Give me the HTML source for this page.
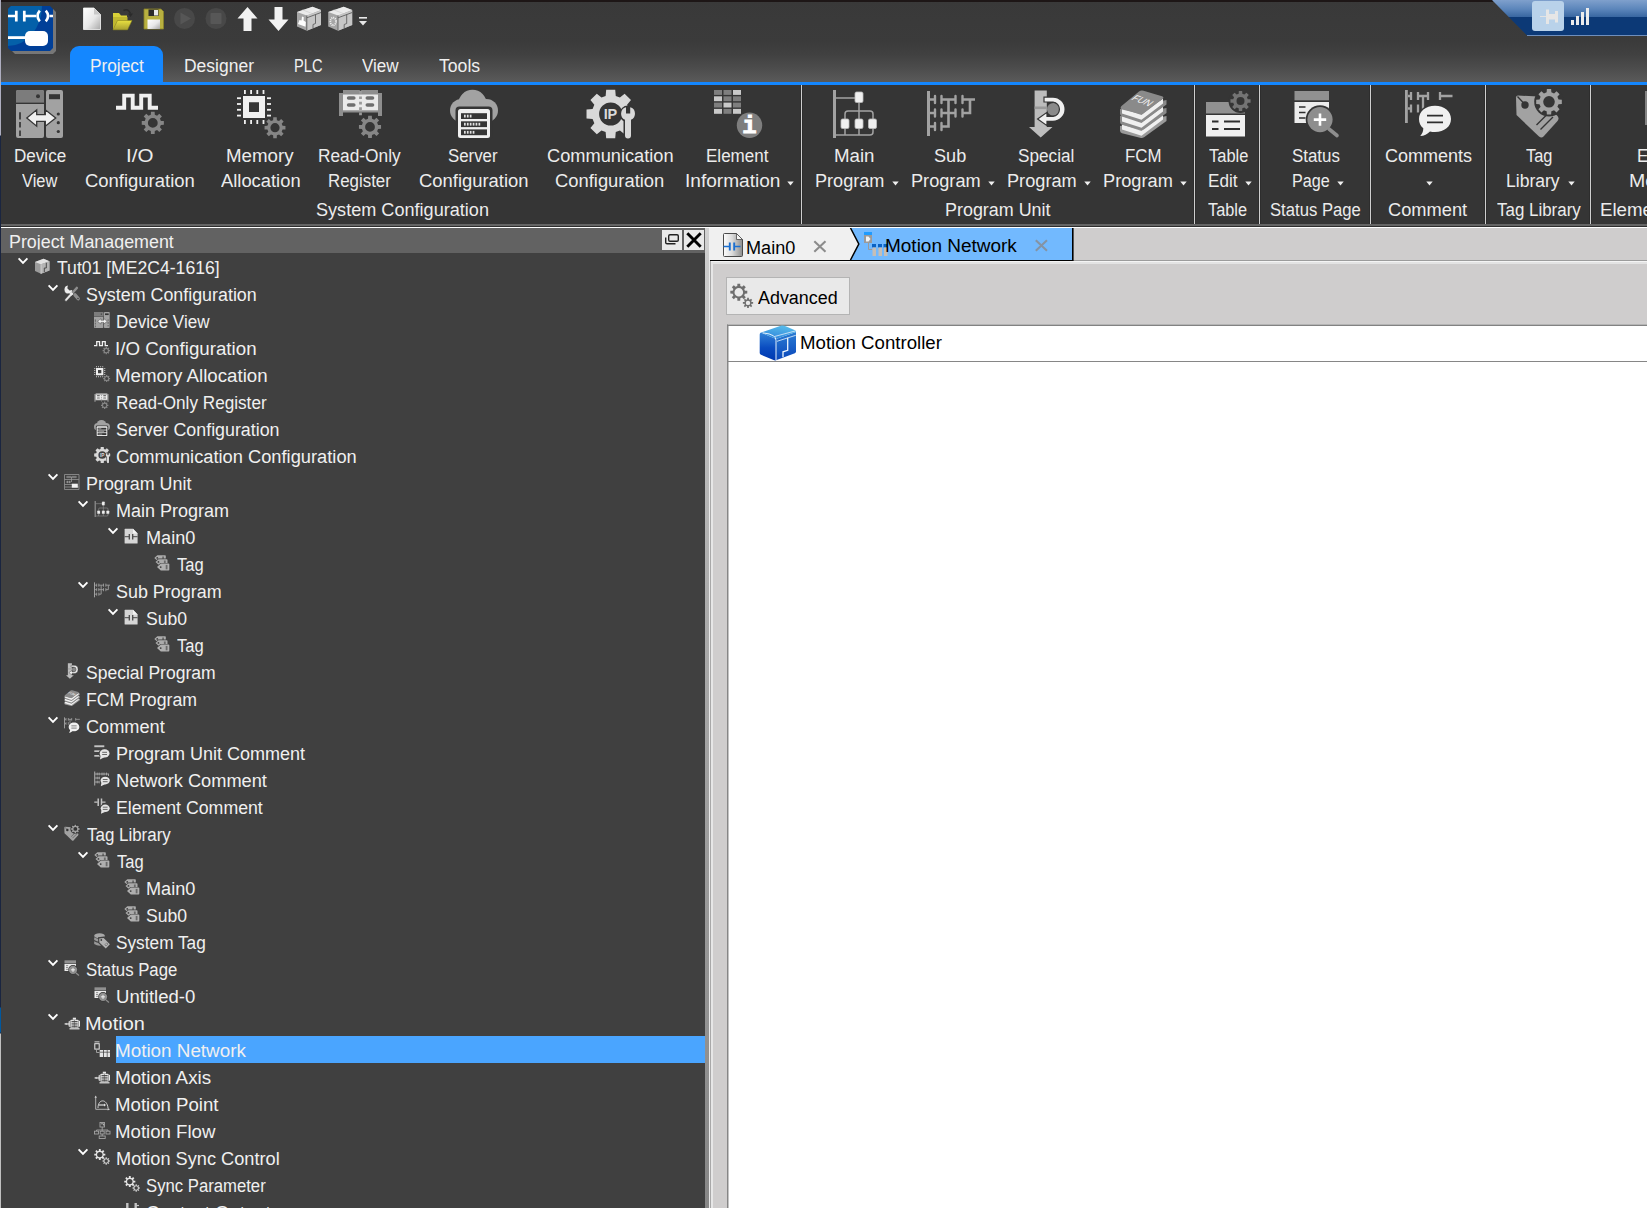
<!DOCTYPE html>
<html><head><meta charset="utf-8"><title>Motion Network</title>
<style>
html,body{margin:0;padding:0;}
body{width:1647px;height:1208px;overflow:hidden;position:relative;background:#404040;font-family:"Liberation Sans",sans-serif;}
.t{position:absolute;white-space:pre;line-height:20px;height:20px;transform-origin:0 50%;font-family:"Liberation Sans",sans-serif;}
.abs{position:absolute;}
#title{position:absolute;left:0;top:0;width:1647px;height:82px;background:linear-gradient(#393939 0,#3b3b3b 42px,#414141 55px,#4c4c4c 68px,#5a5a5a 82px);}
#topline{position:absolute;left:0;top:0;width:1493px;height:2px;background:#1d1616;}
#blue{position:absolute;left:0;top:82px;width:1647px;height:3px;background:#1487ff;}
#ptab{position:absolute;left:70px;top:46px;width:93px;height:39px;background:#1487ff;border-radius:9px 9px 0 0;}
#ribbon{position:absolute;left:0;top:85px;width:1647px;height:139px;background:#353535;}
#ribbot{position:absolute;left:0;top:224px;width:1647px;height:3px;background:#656565;border-bottom:1px solid #2e2e2e;box-sizing:border-box;}
#ribbot2{position:absolute;left:0;top:227px;width:1647px;height:1px;background:#fff;}
#phead{position:absolute;left:0;top:228px;width:706px;height:25px;background:#626262;overflow:hidden;}
#tree{position:absolute;left:0;top:253px;width:705px;height:955px;background:#404040;overflow:hidden;}
#split{position:absolute;left:705px;top:228px;width:4px;height:980px;background:linear-gradient(#d2d2d2 0,#cbcbcb 42px,#ababab 392px,#878787 980px);border-right:1px solid #e8e8e8;}
#right{position:absolute;left:710px;top:228px;width:937px;height:980px;background:#cfcdcd;}
</style></head><body>
<div id="title"></div><div id="topline"></div>
<svg style="position:absolute;left:6px;top:4px;" width="52" height="52" viewBox="0 0 52 52">
<defs><clipPath id="lc"><path d="M5 2 H44 L47 5 V44 L44 47 H5 L2 44 V5 Z"/></clipPath></defs>
<path d="M8 5 H47 L50 8 V47 L47 50 H9 L5 46 Z" fill="#777"/>
<path d="M5 2 H44 L47 5 V44 L44 47 H5 L2 44 V5 Z" fill="#003f98"/>
<g clip-path="url(#lc)"><ellipse cx="2" cy="2" rx="34" ry="40" fill="#0460a9"/></g>
<path d="M2 12 H10 M19 12 H30 M43.500 12 H47" stroke="#fff" stroke-width="2.600" fill="none"/>
<path d="M10.300 6.700 V17.500 M18.300 6.700 V17.500" stroke="#fff" stroke-width="2.700" fill="none"/>
<path d="M33.800 6.700 Q29.300 12 33.800 17.300 M39.800 6.700 Q44.300 12 39.800 17.300" stroke="#fff" stroke-width="2.600" fill="none"/>
<path d="M2 33.600 H22" stroke="#fff" stroke-width="2.800"/>
<rect x="19" y="27" width="23" height="15" rx="5" fill="#fff"/>
</svg>
<svg style="position:absolute;left:80px;top:4px;" width="300" height="32" viewBox="0 0 300 32">
<defs>
<linearGradient id="gdoc" x1="0" y1="0" x2="1" y2="1"><stop offset="0" stop-color="#ffffff"/><stop offset="0.55" stop-color="#e8e8e8"/><stop offset="1" stop-color="#a8a8a8"/></linearGradient>
<linearGradient id="gfold" x1="0" y1="0" x2="0" y2="1"><stop offset="0" stop-color="#e8e040"/><stop offset="1" stop-color="#a8a030"/></linearGradient>
</defs>
<path d="M3.5 4 H14 L20.5 10.5 V25.5 H3.5 Z" fill="url(#gdoc)" stroke="#f8f8f8" stroke-width="0.8"/>
<path d="M14 4 V10.5 H20.5 Z" fill="#c8c8c8"/>
<path d="M33 9 H39 L41 11.5 H47 V16 H33 Z" fill="#d8d038"/>
<path d="M33 13 H47.5 V25.5 H33 Z" fill="#c0b830"/>
<path d="M37.5 16.5 H52 L47.5 25.8 H33 Z" fill="url(#gfold)" stroke="#8a8420" stroke-width="0.6"/>
<path d="M43.5 6.5 Q48 4 50.5 9.5" fill="none" stroke="#2a2a2a" stroke-width="1.6"/><path d="M48 9.5 H53 L50.5 13 Z" fill="#2a2a2a"/>
<path d="M64 5 H81 L83.5 7.5 V25 H64 Z" fill="#b8b040" stroke="#8a8428" stroke-width="0.8"/>
<rect x="68.5" y="5.5" width="10" height="6.5" fill="#2a2a2a"/><rect x="74" y="6" width="4" height="5.5" fill="#e8e8e8"/>
<rect x="67.5" y="15.5" width="12.5" height="9.5" fill="url(#gdoc)"/>
<circle cx="104.5" cy="14.5" r="10.5" fill="#484848"/><path d="M100.5 8.5 L111 14.5 L100.5 20.5 Z" fill="#565656"/>
<circle cx="136" cy="14.5" r="10.5" fill="#484848"/><rect x="130.5" y="9" width="11" height="11" rx="1" fill="#575757"/>
<path d="M167.5 3 L177.5 14.5 H171.5 V27 H163.5 V14.5 H157.5 Z" fill="#f2f2f2"/>
<path d="M198.500 27 L208.5 15.5 H202.5 V3 H194.5 V15.5 H188.500 Z" fill="#f2f2f2"/>
<g transform="translate(217,3)"><path d="M0 5 L15.500 -0.300 L24 3 V18 L9.800 23.800 L0 19.500 Z" fill="#a6a6a6"/><path d="M0 5 L15.500 -0.300 L24 3 L9.800 8.500 Z" fill="#ebebeb"/><path d="M9.800 8.500 L24 3.300 V18 L9.800 23.800 Z" fill="#c6c6c6"/><path d="M9.800 8.500 V23.800 M9.800 10.800 L24 5.500 M18.500 7.500 V16.500 L16 17.500 V21.500" stroke="#606060" stroke-width="0.900" fill="none"/><path d="M5.500 2.800 L15 6.500" stroke="#cdcdcd" stroke-width="0.700" fill="none"/><path d="M5 9.500 L6.800 10.200 L6.500 13.500 L8.800 15 L8.500 19.800 L1 17 L2.500 13 L4.500 13.500 Z" fill="#fff"/></g>
<g transform="translate(248.2,3)"><path d="M0 5 L15.500 -0.300 L24 3 V18 L9.800 23.800 L0 19.500 Z" fill="#a6a6a6"/><path d="M0 5 L15.500 -0.300 L24 3 L9.800 8.500 Z" fill="#ebebeb"/><path d="M9.800 8.500 L24 3.300 V18 L9.800 23.800 Z" fill="#c6c6c6"/><path d="M9.800 8.500 V23.800 M9.800 10.800 L24 5.500 M18.500 7.500 V16.500 L16 17.500 V21.500" stroke="#606060" stroke-width="0.900" fill="none"/><path d="M5.500 2.800 L15 6.500" stroke="#cdcdcd" stroke-width="0.700" fill="none"/><ellipse cx="5" cy="14.500" rx="2.800" ry="3.800" fill="none" stroke="#f4f4f4" stroke-width="1.700" stroke-dasharray="1 0.900"/></g>
<rect x="279" y="13" width="8" height="1.6" fill="#e8e8e8"/><path d="M279 17 H287 L283 21.5 Z" fill="#e8e8e8"/>
</svg>
<svg style="position:absolute;left:1487px;top:0px;" width="160" height="38" viewBox="0 0 160 38">
<defs><linearGradient id="gtr" x1="0" y1="0" x2="0" y2="1"><stop offset="0" stop-color="#7fa0cc"/><stop offset="0.25" stop-color="#5c86bb"/><stop offset="0.46" stop-color="#3a68a2"/><stop offset="0.47" stop-color="#0c3976"/><stop offset="1" stop-color="#0c3976"/></linearGradient></defs>
<path d="M5 0 H160 V36 H40.5 Z" fill="url(#gtr)"/>
<path d="M40 35.5 H160" stroke="#6f8fbd" stroke-width="1.2"/>
<rect x="45" y="1" width="32" height="30" rx="3" fill="#b9d2ea"/>
<path d="M53 16.5 H60" stroke="#e4e4e4" stroke-width="1"/><rect x="59" y="9.500" width="3" height="14.500" fill="#e6e6e6"/><rect x="62" y="14" width="6" height="5.500" fill="#e6e6e6"/><rect x="68" y="11" width="3" height="11.500" fill="#e6e6e6"/>
<rect x="84" y="20" width="3" height="5" fill="#ececec"/><rect x="89" y="16" width="3" height="9" fill="#ececec"/><rect x="94" y="12" width="3" height="13" fill="#ececec"/><rect x="99" y="8" width="3" height="17" fill="#ececec"/>
</svg>
<div id="ptab"></div><div id="blue"></div>
<div id="ribbon"></div><div style="position:absolute;left:800px;top:85px;width:1px;height:139px;background:#cfcfcf;border-left:1px solid #2d2d2d;border-right:1px solid #2d2d2d"></div><div style="position:absolute;left:1193px;top:85px;width:1px;height:139px;background:#cfcfcf;border-left:1px solid #2d2d2d;border-right:1px solid #2d2d2d"></div><div style="position:absolute;left:1258px;top:85px;width:1px;height:139px;background:#cfcfcf;border-left:1px solid #2d2d2d;border-right:1px solid #2d2d2d"></div><div style="position:absolute;left:1369px;top:85px;width:1px;height:139px;background:#cfcfcf;border-left:1px solid #2d2d2d;border-right:1px solid #2d2d2d"></div><div style="position:absolute;left:1484px;top:85px;width:1px;height:139px;background:#cfcfcf;border-left:1px solid #2d2d2d;border-right:1px solid #2d2d2d"></div><div style="position:absolute;left:1589px;top:85px;width:1px;height:139px;background:#cfcfcf;border-left:1px solid #2d2d2d;border-right:1px solid #2d2d2d"></div>
<svg style="position:absolute;left:0;top:85px" width="1647" height="60" viewBox="0 85 1647 60">
<rect x="16" y="90" width="28" height="48" rx="2" fill="#a2a2a2"/>
<path d="M18 90 H42 Q44 90 44 92 V102.500 H16 V92 Q16 90 18 90 Z" fill="#7c7c7c"/>
<rect x="16" y="102.500" width="28" height="1.500" fill="#353535"/>
<rect x="46" y="90" width="17" height="48" rx="2" fill="#a2a2a2"/>
<circle cx="38" cy="96.300" r="2" fill="#353535"/>
<rect x="49" y="94.200" width="11" height="5" fill="#353535"/>
<path d="M20 112.300 V119.500 M20 122 V127.500 M20 130.500 V136" stroke="#353535" stroke-width="1.700"/>
<circle cx="58.300" cy="114" r="1.600" fill="#353535"/><circle cx="58.300" cy="122.700" r="1.600" fill="#353535"/><circle cx="58.300" cy="131.500" r="1.600" fill="#353535"/>
<path d="M26.800 118 L36.700 109.800 V114.700 H45.300 V109.800 L55.700 118 L45.300 126.200 V121.300 H36.700 V126.200 Z" fill="#f0f0f0" stroke="#353535" stroke-width="1.300" stroke-linejoin="miter"/>

<path d="M116 107.800 H124.200 V95.600 H132.700 V107.800 H141.200 V95.600 H149.700 V107.800 H158" fill="none" stroke="#f0f0f0" stroke-width="3.900"/>
<path d="M150.80 114.84 L150.96 111.85 L154.64 111.85 L154.80 114.84 L157.08 115.79 L159.31 113.79 L161.91 116.39 L159.91 118.62 L160.86 120.90 L163.85 121.06 L163.85 124.74 L160.86 124.90 L159.91 127.18 L161.91 129.41 L159.31 132.01 L157.08 130.01 L154.80 130.96 L154.64 133.95 L150.96 133.95 L150.80 130.96 L148.52 130.01 L146.29 132.01 L143.69 129.41 L145.69 127.18 L144.74 124.90 L141.75 124.74 L141.75 121.06 L144.74 120.90 L145.69 118.62 L143.69 116.39 L146.29 113.79 L148.52 115.79 Z M147.90 122.90 a4.90 4.90 0 1 0 9.80 0 a4.90 4.90 0 1 0 -9.80 0 Z" fill="#868686" fill-rule="evenodd"/>

<path d="M243 96 H265 V118 H243 Z M249 102.200 V112 H259 V102.200 Z" fill="#f0f0f0" fill-rule="evenodd"/>
<rect x="244.0" y="90" width="1.800" height="4" fill="#f0f0f0"/><rect x="244.0" y="120" width="1.800" height="4" fill="#f0f0f0"/><rect x="237" y="97.3" width="4" height="1.800" fill="#f0f0f0"/><rect x="267" y="97.3" width="4" height="1.800" fill="#f0f0f0"/><rect x="250.2" y="90" width="1.800" height="4" fill="#f0f0f0"/><rect x="250.2" y="120" width="1.800" height="4" fill="#f0f0f0"/><rect x="237" y="103.1" width="4" height="1.800" fill="#f0f0f0"/><rect x="267" y="103.1" width="4" height="1.800" fill="#f0f0f0"/><rect x="256.4" y="90" width="1.800" height="4" fill="#f0f0f0"/><rect x="256.4" y="120" width="1.800" height="4" fill="#f0f0f0"/><rect x="237" y="108.9" width="4" height="1.800" fill="#f0f0f0"/><rect x="267" y="108.9" width="4" height="1.800" fill="#f0f0f0"/><rect x="262.6" y="90" width="1.800" height="4" fill="#f0f0f0"/><rect x="262.6" y="120" width="1.800" height="4" fill="#f0f0f0"/><rect x="237" y="114.7" width="4" height="1.800" fill="#f0f0f0"/><rect x="267" y="114.7" width="4" height="1.800" fill="#f0f0f0"/>
<path d="M273.12 120.13 L273.26 117.24 L276.74 117.24 L276.88 120.13 L279.02 121.02 L281.16 119.08 L283.62 121.54 L281.68 123.68 L282.57 125.82 L285.46 125.96 L285.46 129.44 L282.57 129.58 L281.68 131.72 L283.62 133.86 L281.16 136.32 L279.02 134.38 L276.88 135.27 L276.74 138.16 L273.26 138.16 L273.12 135.27 L270.98 134.38 L268.84 136.32 L266.38 133.86 L268.32 131.72 L267.43 129.58 L264.54 129.44 L264.54 125.96 L267.43 125.82 L268.32 123.68 L266.38 121.54 L268.84 119.08 L270.98 121.02 Z M270.40 127.70 a4.60 4.60 0 1 0 9.20 0 a4.60 4.60 0 1 0 -9.20 0 Z" fill="#868686" fill-rule="evenodd"/>

<path d="M339 93 H343 V90 H359.500 L360.500 91 L361.500 90 H378 V93 H382 V116 H378 V112.500 H343 V116 H339 Z" fill="#8e8e8e"/>
<rect x="343" y="94.500" width="35" height="15.800" fill="#eaeaea"/>
<path d="M360.500 91 V118" stroke="#9a9a9a" stroke-width="2.800" stroke-dasharray="2.700 2.700"/>
<rect x="346.800" y="96.200" width="8.800" height="3.600" rx="1.800" fill="#6e6e6e"/><rect x="346.800" y="103.200" width="8.800" height="3.600" rx="1.800" fill="#6e6e6e"/>
<rect x="365.500" y="96.200" width="8.800" height="3.600" rx="1.800" fill="#6e6e6e"/><rect x="365.500" y="103.200" width="8.800" height="3.600" rx="1.800" fill="#6e6e6e"/>
<path d="M368.00 118.84 L368.16 115.85 L371.84 115.85 L372.00 118.84 L374.28 119.79 L376.51 117.79 L379.11 120.39 L377.11 122.62 L378.06 124.90 L381.05 125.06 L381.05 128.74 L378.06 128.90 L377.11 131.18 L379.11 133.41 L376.51 136.01 L374.28 134.01 L372.00 134.96 L371.84 137.95 L368.16 137.95 L368.00 134.96 L365.72 134.01 L363.49 136.01 L360.89 133.41 L362.89 131.18 L361.94 128.90 L358.95 128.74 L358.95 125.06 L361.94 124.90 L362.89 122.62 L360.89 120.39 L363.49 117.79 L365.72 119.79 Z M365.10 126.90 a4.90 4.90 0 1 0 9.80 0 a4.90 4.90 0 1 0 -9.80 0 Z" fill="#868686" fill-rule="evenodd"/>

<circle cx="472.500" cy="104" r="14.200" fill="#a2a2a2"/><circle cx="461.500" cy="110.500" r="11.500" fill="#a2a2a2"/><circle cx="486.500" cy="110.500" r="11.500" fill="#a2a2a2"/>
<rect x="455.500" y="106.500" width="37" height="33" rx="4" fill="#353535"/>
<rect x="458" y="109" width="32" height="29" rx="2.500" fill="#f0f0f0"/>
<rect x="461" y="113.2" width="26" height="5.800" fill="#353535"/><rect x="464.0" y="114.7" width="1.700" height="2.800" fill="#e0e0e0"/><rect x="466.9" y="114.7" width="1.700" height="2.800" fill="#e0e0e0"/><rect x="469.8" y="114.7" width="1.700" height="2.800" fill="#e0e0e0"/><rect x="461" y="121.3" width="26" height="5.800" fill="#353535"/><rect x="464.0" y="122.8" width="1.700" height="2.800" fill="#e0e0e0"/><rect x="466.9" y="122.8" width="1.700" height="2.800" fill="#e0e0e0"/><rect x="469.8" y="122.8" width="1.700" height="2.800" fill="#e0e0e0"/><rect x="472.7" y="122.8" width="1.700" height="2.800" fill="#e0e0e0"/><rect x="475.6" y="122.8" width="1.700" height="2.800" fill="#e0e0e0"/><rect x="478.5" y="122.8" width="1.700" height="2.800" fill="#e0e0e0"/><rect x="461" y="129.4" width="26" height="5.800" fill="#353535"/><rect x="464.0" y="130.9" width="1.700" height="2.800" fill="#e0e0e0"/><rect x="466.9" y="130.9" width="1.700" height="2.800" fill="#e0e0e0"/><rect x="469.8" y="130.9" width="1.700" height="2.800" fill="#e0e0e0"/><rect x="472.7" y="130.9" width="1.700" height="2.800" fill="#e0e0e0"/>

<path d="M605.64 95.89 L606.18 89.82 L615.22 89.82 L615.76 95.89 L619.92 97.62 L624.60 93.71 L630.99 100.10 L627.08 104.78 L628.81 108.94 L634.88 109.48 L634.88 118.52 L628.81 119.06 L627.08 123.22 L630.99 127.90 L624.60 134.29 L619.92 130.38 L615.76 132.11 L615.22 138.18 L606.18 138.18 L605.64 132.11 L601.48 130.38 L596.80 134.29 L590.41 127.90 L594.32 123.22 L592.59 119.06 L586.52 118.52 L586.52 109.48 L592.59 108.94 L594.32 104.78 L590.41 100.10 L596.80 93.71 L601.48 97.62 Z M599.10 114.00 a11.60 11.60 0 1 0 23.20 0 a11.60 11.60 0 1 0 -23.20 0 Z" fill="#d9d9d9" fill-rule="evenodd"/>
<path d="M619.500 114 a8.500 8.500 0 1 1 17 0 a8.500 8.500 0 0 1 -4 7.200 V140 H623.500 V121.200 a8.500 8.500 0 0 1 -4 -7.200 Z" fill="#353535"/>
<path d="M626 107.300 V113.500 H630.200 V107.300 A6.600 6.600 0 0 1 631 119.700 V135.500 A3 3 0 0 1 625 135.500 V119.700 A6.600 6.600 0 0 1 626 107.300 Z" fill="#d9d9d9"/>
<text x="610.400" y="119.300" font-family="Liberation Sans, sans-serif" font-weight="bold" font-size="14.500" fill="#d9d9d9" text-anchor="middle" letter-spacing="-0.3">IP</text>
<rect x="714.0" y="90.0" width="8" height="4.900" fill="#7e7e7e"/><rect x="723.5" y="90.0" width="8" height="4.900" fill="#7e7e7e"/><rect x="733.0" y="90.0" width="8" height="4.900" fill="#c9c9c9"/><rect x="714.0" y="96.3" width="8" height="4.900" fill="#c9c9c9"/><rect x="723.5" y="96.3" width="8" height="4.900" fill="#7e7e7e"/><rect x="733.0" y="96.3" width="8" height="4.900" fill="#7e7e7e"/><rect x="714.0" y="102.6" width="8" height="4.900" fill="#7e7e7e"/><rect x="723.5" y="102.6" width="8" height="4.900" fill="#c9c9c9"/><rect x="733.0" y="102.6" width="8" height="4.900" fill="#7e7e7e"/><rect x="714.0" y="108.9" width="8" height="4.900" fill="#c9c9c9"/><rect x="723.5" y="108.9" width="8" height="4.900" fill="#7e7e7e"/><rect x="733.0" y="108.9" width="8" height="4.900" fill="#c9c9c9"/>
<circle cx="749.500" cy="125.200" r="12.700" fill="#7e7e7e"/>
<text x="749.500" y="133.200" font-family="Liberation Mono, monospace" font-weight="bold" font-size="24" fill="#fff" stroke="#fff" stroke-width="0.900" text-anchor="middle">i</text>

<rect x="833" y="90" width="3" height="48" fill="#a2a2a2"/>
<path d="M836 98 H856 M859 102 V135 M836 135 H870 Q873 135 873 132 V128 M845 128 V135 M845 119 V114 Q845 111 848 111 H870 Q873 111 873 114 V119" fill="none" stroke="#a2a2a2" stroke-width="1.500"/>
<rect x="855" y="92" width="8" height="10.500" rx="1.500" fill="#f0f0f0" stroke="#bdbdbd" stroke-width="0.800"/>
<rect x="841" y="119" width="8" height="9.500" rx="1.500" fill="#f0f0f0" stroke="#bdbdbd" stroke-width="0.800"/>
<rect x="855" y="119" width="8" height="9.500" rx="1.500" fill="#f0f0f0" stroke="#bdbdbd" stroke-width="0.800"/>
<rect x="868.500" y="119" width="8" height="9.500" rx="1.500" fill="#f0f0f0" stroke="#bdbdbd" stroke-width="0.800"/>

<rect x="927" y="91" width="3" height="45" fill="#a2a2a2"/>
<g fill="none" stroke="#a2a2a2" stroke-width="2.400" stroke-linecap="round">
<path d="M930 99.500 H935 M935 96 V103 M941.500 96 V103 M941.500 99.500 H955.500 M955.500 96 V103 M962.500 96 V103"/>
<path d="M930 113 H935 M935 109.500 V116.500 M941.500 109.500 V116.500 M941.500 113 H955.500 M955.500 109.500 V116.500 M962.500 109.500 V116.500"/>
<path d="M930 126.500 H935 M935 123 V130 M941.500 123 V130"/>
</g>
<g fill="none" stroke="#a2a2a2" stroke-width="2.600">
<path d="M962.500 99.500 H975 M970 99.500 V113 H962.500"/>
<path d="M948.500 99.500 V126.500 H941.500"/>
</g>

<path d="M1034.600 90.500 H1046.800 V127 H1052.500 L1040.700 137.500 L1029 127 H1034.600 Z" fill="#bdbdbd"/>
<rect x="1034.600" y="106.500" width="12.200" height="2.600" fill="#9a9a9a"/>
<circle cx="1053.300" cy="109.300" r="6.300" fill="#8a8a8a"/>
<path d="M1044 97.100 H1053 A12.100 12.100 0 0 1 1053 121.300 H1047 V125.700 L1037.600 119 L1047 112.300 V116.500 H1053 A7.300 7.300 0 0 0 1053 102 H1044 Z" fill="#f0f0f0" stroke="#353535" stroke-width="1.200"/>

<g>
<path d="M1120 126 L1120 130.500 Q1120 132.500 1122 133.300 L1141 138 Q1142.500 138.300 1144 137.300 L1166.500 121 V116 Z" fill="#9a9a9a"/>
<path d="M1122 124.500 L1141.500 131 L1163 114.500 V119.500 L1141.500 135.700 L1122 129.500 Z" fill="#f0f0f0"/>
<path d="M1120 116 L1120 122 Q1120 124 1122 124.800 L1141 130 Q1142.500 130.300 1144 129.300 L1166.500 113 V108 Z" fill="#8a8a8a"/>
<path d="M1122 116.500 L1141.500 123 L1163 106.500 V111.500 L1141.500 127.700 L1122 121.500 Z" fill="#f0f0f0"/>
<path d="M1120 109 L1120 113.500 Q1120 115.500 1122 116.300 L1141 121.500 Q1142.500 121.800 1144 120.800 L1166.500 104.500 V100 Z" fill="#8a8a8a"/>
<path d="M1122 108.500 L1141.500 115 L1163 98.500 V103.500 L1141.500 119.700 L1122 113.500 Z" fill="#f0f0f0"/>
<path d="M1121.500 106 L1139 91.500 Q1141 90 1143.500 90.700 L1162 96.200 Q1164.500 97.200 1162.500 99 L1143 113.500 Q1141.500 114.300 1139.500 113.800 L1122 109.500 Q1119.500 108.300 1121.500 106 Z" fill="#8a8a8a"/>
<text transform="translate(1130.500,99.500) rotate(21) skewX(-30)" font-family="Liberation Sans, sans-serif" font-size="9.500" fill="#f0f0f0">FUN</text>
</g>

<rect x="1206" y="102" width="39" height="11.500" fill="#919191"/>
<rect x="1206" y="115" width="39" height="21.500" fill="#f0f0f0"/>
<path d="M1212 121.500 H1218.500 M1224 121.500 H1240 M1212 129 H1218.500 M1224 129 H1240" stroke="#2e2e2e" stroke-width="1.800"/>
<circle cx="1240.500" cy="101" r="12" fill="#353535"/>
<path d="M1238.69 93.72 L1238.83 90.94 L1242.17 90.94 L1242.31 93.72 L1244.37 94.57 L1246.43 92.70 L1248.80 95.07 L1246.93 97.13 L1247.78 99.19 L1250.56 99.33 L1250.56 102.67 L1247.78 102.81 L1246.93 104.87 L1248.80 106.93 L1246.43 109.30 L1244.37 107.43 L1242.31 108.28 L1242.17 111.06 L1238.83 111.06 L1238.69 108.28 L1236.63 107.43 L1234.57 109.30 L1232.20 106.93 L1234.07 104.87 L1233.22 102.81 L1230.44 102.67 L1230.44 99.33 L1233.22 99.19 L1234.07 97.13 L1232.20 95.07 L1234.57 92.70 L1236.63 94.57 Z M1236.50 101.00 a4.00 4.00 0 1 0 8.00 0 a4.00 4.00 0 1 0 -8.00 0 Z" fill="#747474" fill-rule="evenodd"/>

<rect x="1294.500" y="91" width="34.500" height="9.300" fill="#919191"/>
<rect x="1294.500" y="102" width="34.500" height="21" fill="#ececec"/>
<path d="M1299 107 H1305.500 M1299 112.500 H1305.500 M1299 118 H1305.500" stroke="#2e2e2e" stroke-width="1.500"/>
<circle cx="1320" cy="119.600" r="14.300" fill="#353535"/>
<path d="M1329 129 L1337 135.500" stroke="#8e8e8e" stroke-width="3.600" stroke-linecap="round"/>
<circle cx="1320" cy="119.600" r="12.600" fill="#8e8e8e"/>
<path d="M1313.800 119.600 H1326.200 M1320 113.400 V125.800" stroke="#fff" stroke-width="2.600"/>

<rect x="1405" y="90" width="2.800" height="33" fill="#a2a2a2"/>
<g fill="none" stroke="#a2a2a2" stroke-width="2.300">
<path d="M1408 96 H1411 M1411 92 V100 M1418 92 V100 M1418 96 H1428 M1428 92 V100 M1440 92 V100 M1440 96 H1452.500"/>
<path d="M1408 108.500 H1411 M1411 104.500 V112.500 M1418 104.500 V112.500 M1423 96 V110"/>
</g>
<ellipse cx="1435" cy="119" rx="17.800" ry="15" fill="#353535"/>
<path d="M1435 105.800 C1444.500 105.800 1451 111.500 1451 119 C1451 126.500 1444.500 132 1435 132 C1433 132 1431.500 131.800 1430 131.400 C1427.500 134 1424 135.800 1420.300 136 C1422.500 133.500 1423.300 131 1423.300 128.300 C1420.500 126 1419 122.800 1419 119 C1419 111.500 1425.500 105.800 1435 105.800 Z" fill="#f0f0f0"/>
<path d="M1427 115.600 H1443 M1427 122.300 H1443" stroke="#2e2e2e" stroke-width="1.700"/>

<path d="M1516 97.500 Q1516 95.500 1518 95.500 L1538 96.500 L1557.500 116 Q1559.500 118.500 1557.500 121 L1543.500 136.500 Q1541.500 138.500 1539 136.500 L1516.500 115 Z" fill="#a2a2a2"/>
<circle cx="1525" cy="105" r="3.700" fill="#353535"/>
<path d="M1517.500 96.500 L1524 103.500" stroke="#353535" stroke-width="1.300"/>
<path d="M1536.500 125 L1549 112.500 M1540.500 129.500 L1553 117" stroke="#353535" stroke-width="1.400"/>
<circle cx="1549" cy="101.800" r="14.800" fill="#353535"/>
<path d="M1546.64 92.29 L1546.87 88.98 L1551.13 88.98 L1551.36 92.29 L1554.05 93.40 L1556.56 91.22 L1559.58 94.24 L1557.40 96.75 L1558.51 99.44 L1561.82 99.67 L1561.82 103.93 L1558.51 104.16 L1557.40 106.85 L1559.58 109.36 L1556.56 112.38 L1554.05 110.20 L1551.36 111.31 L1551.13 114.62 L1546.87 114.62 L1546.64 111.31 L1543.95 110.20 L1541.44 112.38 L1538.42 109.36 L1540.60 106.85 L1539.49 104.16 L1536.18 103.93 L1536.18 99.67 L1539.49 99.44 L1540.60 96.75 L1538.42 94.24 L1541.44 91.22 L1543.95 93.40 Z M1543.20 101.80 a5.80 5.80 0 1 0 11.60 0 a5.80 5.80 0 1 0 -11.60 0 Z" fill="#a2a2a2" fill-rule="evenodd"/>
<rect x="1645" y="91" width="4" height="34" fill="#858585"/></svg>
<svg style="position:absolute;left:786.9px;top:181px" width="7" height="5" viewBox="0 0 7 5"><path d="M0.3 0.5 H6.7 L3.5 4.4 Z" fill="#f0f0f0"/></svg><svg style="position:absolute;left:891.8px;top:181px" width="7" height="5" viewBox="0 0 7 5"><path d="M0.3 0.5 H6.7 L3.5 4.4 Z" fill="#f0f0f0"/></svg><svg style="position:absolute;left:987.5px;top:181px" width="7" height="5" viewBox="0 0 7 5"><path d="M0.3 0.5 H6.7 L3.5 4.4 Z" fill="#f0f0f0"/></svg><svg style="position:absolute;left:1083.7px;top:181px" width="7" height="5" viewBox="0 0 7 5"><path d="M0.3 0.5 H6.7 L3.5 4.4 Z" fill="#f0f0f0"/></svg><svg style="position:absolute;left:1180.0px;top:181px" width="7" height="5" viewBox="0 0 7 5"><path d="M0.3 0.5 H6.7 L3.5 4.4 Z" fill="#f0f0f0"/></svg><svg style="position:absolute;left:1245.0px;top:181px" width="7" height="5" viewBox="0 0 7 5"><path d="M0.3 0.5 H6.7 L3.5 4.4 Z" fill="#f0f0f0"/></svg><svg style="position:absolute;left:1337.2px;top:181px" width="7" height="5" viewBox="0 0 7 5"><path d="M0.3 0.5 H6.7 L3.5 4.4 Z" fill="#f0f0f0"/></svg><svg style="position:absolute;left:1425.7px;top:181px" width="7" height="5" viewBox="0 0 7 5"><path d="M0.3 0.5 H6.7 L3.5 4.4 Z" fill="#f0f0f0"/></svg><svg style="position:absolute;left:1568.0px;top:181px" width="7" height="5" viewBox="0 0 7 5"><path d="M0.3 0.5 H6.7 L3.5 4.4 Z" fill="#f0f0f0"/></svg><svg style="position:absolute;left:1701.5px;top:181px" width="7" height="5" viewBox="0 0 7 5"><path d="M0.3 0.5 H6.7 L3.5 4.4 Z" fill="#f0f0f0"/></svg>
<div id="ribbot"></div><div id="ribbot2"></div>
<div id="phead"></div>
<svg style="position:absolute;left:660px;top:228px;" width="46" height="25" viewBox="0 0 46 25">
<rect x="2" y="2" width="20" height="20" fill="#e9e9e9"/>
<rect x="24" y="2" width="20" height="20" fill="#e9e9e9"/>
<rect x="8.700" y="6.700" width="9.600" height="6.600" rx="1.3" fill="none" stroke="#222" stroke-width="1.4"/>
<path d="M5.700 9.500 V14.400 Q5.700 15.800 7.100 15.800 H15.500" fill="none" stroke="#222" stroke-width="1.4"/>
<path d="M27.300 5.300 L40.700 18.700 M40.700 5.300 L27.300 18.700" stroke="#000" stroke-width="2.900"/>
</svg>
<div id="tree"><div style="position:absolute;left:34.0px;top:5px;width:16px;height:16px"><svg width="16" height="16" viewBox="0 0 16 16" style="display:block;overflow:visible">
<path d="M1 4 L9.500 0.800 L15.500 3.200 V12.500 L7 15.800 L1 13 Z" fill="#9c9c9c"/>
<path d="M1 4 L9.500 0.800 L15.500 3.200 L7 6.300 Z" fill="#e2e2e2"/>
<path d="M7 6.300 L15.500 3.200 V12.500 L7 15.800 Z" fill="#b4b4b4"/>
<path d="M7 6.300 V15.800" stroke="#dcdcdc" stroke-width="0.700"/>
<path d="M12.300 4.800 V10 H10.300 V14" stroke="#4a4a4a" stroke-width="1" fill="none"/>
</svg></div><svg style="position:absolute;left:16.8px;top:3px" width="12" height="10" viewBox="0 0 12 10"><path d="M1.6 2.4 L6 6.8 L10.4 2.4" fill="none" stroke="#fff" stroke-width="1.9"/></svg><div style="position:absolute;left:64.0px;top:32px;width:16px;height:16px"><svg width="16" height="16" viewBox="0 0 16 16" style="display:block;overflow:visible">
<path d="M2 15 L12.800 3" stroke="#8e8e8e" stroke-width="2.600" stroke-linecap="round"/>
<path d="M11 9.800 L14.200 13.600" stroke="#8e8e8e" stroke-width="3.400" stroke-linecap="round"/>
<circle cx="14" cy="13.500" r="0.800" fill="#404040"/>
<path d="M2.200 14.800 L6.200 10.400" stroke="#e8e8e8" stroke-width="1.700" stroke-linecap="round"/>
<path d="M6.500 9.700 L8.300 8" stroke="#e8e8e8" stroke-width="2.300"/>
<path d="M3.900 0.600 A3.900 3.900 0 1 0 8.300 4.900 L5.500 5.400 L3.300 3.300 Z" fill="#ececec"/>
<path d="M0.500 3.500 A4 4 0 0 0 7.500 7.200 L9.300 9 L7.500 10.800 L5.400 8.600 A4 4 0 0 1 0.500 3.500 Z" fill="#ececec"/>
</svg></div><svg style="position:absolute;left:46.8px;top:30px" width="12" height="10" viewBox="0 0 12 10"><path d="M1.6 2.4 L6 6.8 L10.4 2.4" fill="none" stroke="#fff" stroke-width="1.9"/></svg><div style="position:absolute;left:94.0px;top:59px;width:16px;height:16px"><svg width="16" height="16" viewBox="16 90 48 48" style="display:block;overflow:visible">
<rect x="16" y="90" width="28" height="48" rx="2" fill="#a2a2a2"/>
<path d="M18 90 H42 Q44 90 44 92 V102.500 H16 V92 Q16 90 18 90 Z" fill="#7c7c7c"/>
<rect x="16" y="102.500" width="28" height="1.500" fill="#353535"/>
<rect x="46" y="90" width="17" height="48" rx="2" fill="#a2a2a2"/>
<circle cx="38" cy="96.300" r="2" fill="#353535"/>
<rect x="49" y="94.200" width="11" height="5" fill="#353535"/>
<path d="M20 112.300 V119.500 M20 122 V127.500 M20 130.500 V136" stroke="#353535" stroke-width="1.700"/>
<circle cx="58.300" cy="114" r="1.600" fill="#353535"/><circle cx="58.300" cy="122.700" r="1.600" fill="#353535"/><circle cx="58.300" cy="131.500" r="1.600" fill="#353535"/>
<path d="M26.800 118 L36.700 109.800 V114.700 H45.300 V109.800 L55.700 118 L45.300 126.200 V121.300 H36.700 V126.200 Z" fill="#f0f0f0" stroke="#353535" stroke-width="1.300" stroke-linejoin="miter"/>
</svg></div><div style="position:absolute;left:94.0px;top:86px;width:16px;height:16px"><svg width="16" height="16" viewBox="116 88 48 48" style="display:block;overflow:visible">
<path d="M116 107.800 H124.200 V95.600 H132.700 V107.800 H141.200 V95.600 H149.700 V107.800 H158" fill="none" stroke="#f0f0f0" stroke-width="3.900"/>
<path d="M150.80 114.84 L150.96 111.85 L154.64 111.85 L154.80 114.84 L157.08 115.79 L159.31 113.79 L161.91 116.39 L159.91 118.62 L160.86 120.90 L163.85 121.06 L163.85 124.74 L160.86 124.90 L159.91 127.18 L161.91 129.41 L159.31 132.01 L157.08 130.01 L154.80 130.96 L154.64 133.95 L150.96 133.95 L150.80 130.96 L148.52 130.01 L146.29 132.01 L143.69 129.41 L145.69 127.18 L144.74 124.90 L141.75 124.74 L141.75 121.06 L144.74 120.90 L145.69 118.62 L143.69 116.39 L146.29 113.79 L148.52 115.79 Z M147.90 122.90 a4.90 4.90 0 1 0 9.80 0 a4.90 4.90 0 1 0 -9.80 0 Z" fill="#868686" fill-rule="evenodd"/>
</svg></div><div style="position:absolute;left:94.0px;top:113px;width:16px;height:16px"><svg width="16" height="16" viewBox="237 90 48 48" style="display:block;overflow:visible">
<path d="M243 96 H265 V118 H243 Z M249 102.200 V112 H259 V102.200 Z" fill="#f0f0f0" fill-rule="evenodd"/>
<rect x="244.0" y="90" width="1.800" height="4" fill="#f0f0f0"/><rect x="244.0" y="120" width="1.800" height="4" fill="#f0f0f0"/><rect x="237" y="97.3" width="4" height="1.800" fill="#f0f0f0"/><rect x="267" y="97.3" width="4" height="1.800" fill="#f0f0f0"/><rect x="250.2" y="90" width="1.800" height="4" fill="#f0f0f0"/><rect x="250.2" y="120" width="1.800" height="4" fill="#f0f0f0"/><rect x="237" y="103.1" width="4" height="1.800" fill="#f0f0f0"/><rect x="267" y="103.1" width="4" height="1.800" fill="#f0f0f0"/><rect x="256.4" y="90" width="1.800" height="4" fill="#f0f0f0"/><rect x="256.4" y="120" width="1.800" height="4" fill="#f0f0f0"/><rect x="237" y="108.9" width="4" height="1.800" fill="#f0f0f0"/><rect x="267" y="108.9" width="4" height="1.800" fill="#f0f0f0"/><rect x="262.6" y="90" width="1.800" height="4" fill="#f0f0f0"/><rect x="262.6" y="120" width="1.800" height="4" fill="#f0f0f0"/><rect x="237" y="114.7" width="4" height="1.800" fill="#f0f0f0"/><rect x="267" y="114.7" width="4" height="1.800" fill="#f0f0f0"/>
<path d="M273.12 120.13 L273.26 117.24 L276.74 117.24 L276.88 120.13 L279.02 121.02 L281.16 119.08 L283.62 121.54 L281.68 123.68 L282.57 125.82 L285.46 125.96 L285.46 129.44 L282.57 129.58 L281.68 131.72 L283.62 133.86 L281.16 136.32 L279.02 134.38 L276.88 135.27 L276.74 138.16 L273.26 138.16 L273.12 135.27 L270.98 134.38 L268.84 136.32 L266.38 133.86 L268.32 131.72 L267.43 129.58 L264.54 129.44 L264.54 125.96 L267.43 125.82 L268.32 123.68 L266.38 121.54 L268.84 119.08 L270.98 121.02 Z M270.40 127.70 a4.60 4.60 0 1 0 9.20 0 a4.60 4.60 0 1 0 -9.20 0 Z" fill="#868686" fill-rule="evenodd"/>
</svg></div><div style="position:absolute;left:94.0px;top:140px;width:16px;height:16px"><svg width="16" height="16" viewBox="338 90 48 48" style="display:block;overflow:visible">
<path d="M339 93 H343 V90 H359.500 L360.500 91 L361.500 90 H378 V93 H382 V116 H378 V112.500 H343 V116 H339 Z" fill="#8e8e8e"/>
<rect x="343" y="94.500" width="35" height="15.800" fill="#eaeaea"/>
<path d="M360.500 91 V118" stroke="#9a9a9a" stroke-width="2.800" stroke-dasharray="2.700 2.700"/>
<rect x="346.800" y="96.200" width="8.800" height="3.600" rx="1.800" fill="#6e6e6e"/><rect x="346.800" y="103.200" width="8.800" height="3.600" rx="1.800" fill="#6e6e6e"/>
<rect x="365.500" y="96.200" width="8.800" height="3.600" rx="1.800" fill="#6e6e6e"/><rect x="365.500" y="103.200" width="8.800" height="3.600" rx="1.800" fill="#6e6e6e"/>
<path d="M368.00 118.84 L368.16 115.85 L371.84 115.85 L372.00 118.84 L374.28 119.79 L376.51 117.79 L379.11 120.39 L377.11 122.62 L378.06 124.90 L381.05 125.06 L381.05 128.74 L378.06 128.90 L377.11 131.18 L379.11 133.41 L376.51 136.01 L374.28 134.01 L372.00 134.96 L371.84 137.95 L368.16 137.95 L368.00 134.96 L365.72 134.01 L363.49 136.01 L360.89 133.41 L362.89 131.18 L361.94 128.90 L358.95 128.74 L358.95 125.06 L361.94 124.90 L362.89 122.62 L360.89 120.39 L363.49 117.79 L365.72 119.79 Z M365.10 126.90 a4.90 4.90 0 1 0 9.80 0 a4.90 4.90 0 1 0 -9.80 0 Z" fill="#868686" fill-rule="evenodd"/>
</svg></div><div style="position:absolute;left:94.0px;top:167px;width:16px;height:16px"><svg width="16" height="16" viewBox="450 90 48 48" style="display:block;overflow:visible">
<circle cx="472.500" cy="104" r="14.200" fill="#a2a2a2"/><circle cx="461.500" cy="110.500" r="11.500" fill="#a2a2a2"/><circle cx="486.500" cy="110.500" r="11.500" fill="#a2a2a2"/>
<rect x="455.500" y="106.500" width="37" height="33" rx="4" fill="#353535"/>
<rect x="458" y="109" width="32" height="29" rx="2.500" fill="#f0f0f0"/>
<rect x="461" y="113.2" width="26" height="5.800" fill="#353535"/><rect x="464.0" y="114.7" width="1.700" height="2.800" fill="#e0e0e0"/><rect x="466.9" y="114.7" width="1.700" height="2.800" fill="#e0e0e0"/><rect x="469.8" y="114.7" width="1.700" height="2.800" fill="#e0e0e0"/><rect x="461" y="121.3" width="26" height="5.800" fill="#353535"/><rect x="464.0" y="122.8" width="1.700" height="2.800" fill="#e0e0e0"/><rect x="466.9" y="122.8" width="1.700" height="2.800" fill="#e0e0e0"/><rect x="469.8" y="122.8" width="1.700" height="2.800" fill="#e0e0e0"/><rect x="472.7" y="122.8" width="1.700" height="2.800" fill="#e0e0e0"/><rect x="475.6" y="122.8" width="1.700" height="2.800" fill="#e0e0e0"/><rect x="478.5" y="122.8" width="1.700" height="2.800" fill="#e0e0e0"/><rect x="461" y="129.4" width="26" height="5.800" fill="#353535"/><rect x="464.0" y="130.9" width="1.700" height="2.800" fill="#e0e0e0"/><rect x="466.9" y="130.9" width="1.700" height="2.800" fill="#e0e0e0"/><rect x="469.8" y="130.9" width="1.700" height="2.800" fill="#e0e0e0"/><rect x="472.7" y="130.9" width="1.700" height="2.800" fill="#e0e0e0"/>
</svg></div><div style="position:absolute;left:94.0px;top:194px;width:16px;height:16px"><svg width="16" height="16" viewBox="586 90 48 48" style="display:block;overflow:visible">
<path d="M605.64 95.89 L606.18 89.82 L615.22 89.82 L615.76 95.89 L619.92 97.62 L624.60 93.71 L630.99 100.10 L627.08 104.78 L628.81 108.94 L634.88 109.48 L634.88 118.52 L628.81 119.06 L627.08 123.22 L630.99 127.90 L624.60 134.29 L619.92 130.38 L615.76 132.11 L615.22 138.18 L606.18 138.18 L605.64 132.11 L601.48 130.38 L596.80 134.29 L590.41 127.90 L594.32 123.22 L592.59 119.06 L586.52 118.52 L586.52 109.48 L592.59 108.94 L594.32 104.78 L590.41 100.10 L596.80 93.71 L601.48 97.62 Z M599.10 114.00 a11.60 11.60 0 1 0 23.20 0 a11.60 11.60 0 1 0 -23.20 0 Z" fill="#d9d9d9" fill-rule="evenodd"/>
<path d="M619.500 114 a8.500 8.500 0 1 1 17 0 a8.500 8.500 0 0 1 -4 7.200 V140 H623.500 V121.200 a8.500 8.500 0 0 1 -4 -7.200 Z" fill="#353535"/>
<path d="M626 107.300 V113.500 H630.200 V107.300 A6.600 6.600 0 0 1 631 119.700 V135.500 A3 3 0 0 1 625 135.500 V119.700 A6.600 6.600 0 0 1 626 107.300 Z" fill="#d9d9d9"/>
<text x="610.400" y="119.300" font-family="Liberation Sans, sans-serif" font-weight="bold" font-size="14.500" fill="#d9d9d9" text-anchor="middle" letter-spacing="-0.3">IP</text>
</svg></div><div style="position:absolute;left:64.0px;top:221px;width:16px;height:16px"><svg width="16" height="16" viewBox="0 0 16 16" style="display:block;overflow:visible">
<path d="M0.500 0.500 H15 V15.500 H0.500 Z M0.500 5.500 H15 M0.500 10.500 H8 M0.500 13 H15" fill="none" stroke="#8c8c8c" stroke-width="0.900"/>
<path d="M2 3 H13 M4 1.800 V4.200 M6 1.800 V4.200 M9 1.800 V4.200 M11 1.800 V4.200 M2 8 H7 M3.500 6.800 V9.200 M5.500 6.800 V9.200 M7.500 3 V8" fill="none" stroke="#9c9c9c" stroke-width="0.800"/>
<rect x="7.800" y="9.700" width="6" height="4" fill="#f2f2f2"/>
</svg></div><svg style="position:absolute;left:46.8px;top:219px" width="12" height="10" viewBox="0 0 12 10"><path d="M1.6 2.4 L6 6.8 L10.4 2.4" fill="none" stroke="#fff" stroke-width="1.9"/></svg><div style="position:absolute;left:94.0px;top:248px;width:16px;height:16px"><svg width="16" height="16" viewBox="831 90 48 48" style="display:block;overflow:visible">
<rect x="833" y="90" width="3" height="48" fill="#a2a2a2"/>
<path d="M836 98 H856 M859 102 V135 M836 135 H870 Q873 135 873 132 V128 M845 128 V135 M845 119 V114 Q845 111 848 111 H870 Q873 111 873 114 V119" fill="none" stroke="#a2a2a2" stroke-width="1.500"/>
<rect x="855" y="92" width="8" height="10.500" rx="1.500" fill="#f0f0f0" stroke="#bdbdbd" stroke-width="0.800"/>
<rect x="841" y="119" width="8" height="9.500" rx="1.500" fill="#f0f0f0" stroke="#bdbdbd" stroke-width="0.800"/>
<rect x="855" y="119" width="8" height="9.500" rx="1.500" fill="#f0f0f0" stroke="#bdbdbd" stroke-width="0.800"/>
<rect x="868.500" y="119" width="8" height="9.500" rx="1.500" fill="#f0f0f0" stroke="#bdbdbd" stroke-width="0.800"/>
</svg></div><svg style="position:absolute;left:76.8px;top:246px" width="12" height="10" viewBox="0 0 12 10"><path d="M1.6 2.4 L6 6.8 L10.4 2.4" fill="none" stroke="#fff" stroke-width="1.9"/></svg><div style="position:absolute;left:124.0px;top:275px;width:16px;height:16px"><svg width="16" height="16" viewBox="0 0 16 16" style="display:block;overflow:visible">
<path d="M1.200 0.800 H9 L13.600 5.400 V15 Q13.600 15.600 13 15.600 H1.200 Q0.600 15.600 0.600 15 V1.400 Q0.600 0.800 1.200 0.800 Z" fill="#d6d6d6"/>
<path d="M9 0.800 V5.400 H13.600 Z" fill="#f4f4f4"/>
<path d="M0.600 8.700 H5 M9 8.700 H13.600" stroke="#4a4a4a" stroke-width="1"/>
<path d="M5.300 6 V11.400 M8.700 6 V11.400" stroke="#4a4a4a" stroke-width="1.300"/>
</svg></div><svg style="position:absolute;left:106.8px;top:273px" width="12" height="10" viewBox="0 0 12 10"><path d="M1.6 2.4 L6 6.8 L10.4 2.4" fill="none" stroke="#fff" stroke-width="1.9"/></svg><div style="position:absolute;left:154.0px;top:302px;width:16px;height:16px"><svg width="16" height="16" viewBox="0 0 16 16" style="display:block;overflow:visible"><path d="M3.35 0.2 H11.00 Q11.8 0.2 11.8 1.00 V4.90 Q11.8 5.7 11.00 5.7 H3.35 L0.3 2.95 Z" fill="#ababab"/><circle cx="3.25" cy="2.95" r="0.900" fill="#404040"/><rect x="8.20" y="1.50" width="1.800" height="2.90" fill="#6a6a6a"/><path d="M4.55 4.2 H12.70 Q13.5 4.2 13.5 5.00 V8.90 Q13.5 9.7 12.70 9.7 H4.55 L1.5 6.95 Z" fill="#ababab" stroke="#404040" stroke-width="1.400" paint-order="stroke"/><circle cx="4.45" cy="6.95" r="0.900" fill="#404040"/><rect x="9.90" y="5.50" width="1.800" height="2.90" fill="#6a6a6a"/><path d="M6.80 8.6 H14.50 Q15.3 8.6 15.3 9.40 V14.80 Q15.3 15.6 14.50 15.6 H6.80 L3 12.1 Z" fill="#afafaf" stroke="#404040" stroke-width="1.400" paint-order="stroke"/><circle cx="6.70" cy="12.10" r="0.900" fill="#404040"/><rect x="11.70" y="9.90" width="1.800" height="4.40" fill="#6a6a6a"/></svg></div><div style="position:absolute;left:94.0px;top:329px;width:16px;height:16px"><svg width="16" height="16" viewBox="927 90 48 48" style="display:block;overflow:visible">
<rect x="927" y="91" width="3" height="45" fill="#a2a2a2"/>
<g fill="none" stroke="#a2a2a2" stroke-width="2.400" stroke-linecap="round">
<path d="M930 99.500 H935 M935 96 V103 M941.500 96 V103 M941.500 99.500 H955.500 M955.500 96 V103 M962.500 96 V103"/>
<path d="M930 113 H935 M935 109.500 V116.500 M941.500 109.500 V116.500 M941.500 113 H955.500 M955.500 109.500 V116.500 M962.500 109.500 V116.500"/>
<path d="M930 126.500 H935 M935 123 V130 M941.500 123 V130"/>
</g>
<g fill="none" stroke="#a2a2a2" stroke-width="2.600">
<path d="M962.500 99.500 H975 M970 99.500 V113 H962.500"/>
<path d="M948.500 99.500 V126.500 H941.500"/>
</g>
</svg></div><svg style="position:absolute;left:76.8px;top:327px" width="12" height="10" viewBox="0 0 12 10"><path d="M1.6 2.4 L6 6.8 L10.4 2.4" fill="none" stroke="#fff" stroke-width="1.9"/></svg><div style="position:absolute;left:124.0px;top:356px;width:16px;height:16px"><svg width="16" height="16" viewBox="0 0 16 16" style="display:block;overflow:visible">
<path d="M1.200 0.800 H9 L13.600 5.400 V15 Q13.600 15.600 13 15.600 H1.200 Q0.600 15.600 0.600 15 V1.400 Q0.600 0.800 1.200 0.800 Z" fill="#d6d6d6"/>
<path d="M9 0.800 V5.400 H13.600 Z" fill="#f4f4f4"/>
<path d="M0.600 8.700 H5 M9 8.700 H13.600" stroke="#4a4a4a" stroke-width="1"/>
<path d="M5.300 6 V11.400 M8.700 6 V11.400" stroke="#4a4a4a" stroke-width="1.300"/>
</svg></div><svg style="position:absolute;left:106.8px;top:354px" width="12" height="10" viewBox="0 0 12 10"><path d="M1.6 2.4 L6 6.8 L10.4 2.4" fill="none" stroke="#fff" stroke-width="1.9"/></svg><div style="position:absolute;left:154.0px;top:383px;width:16px;height:16px"><svg width="16" height="16" viewBox="0 0 16 16" style="display:block;overflow:visible"><path d="M3.35 0.2 H11.00 Q11.8 0.2 11.8 1.00 V4.90 Q11.8 5.7 11.00 5.7 H3.35 L0.3 2.95 Z" fill="#ababab"/><circle cx="3.25" cy="2.95" r="0.900" fill="#404040"/><rect x="8.20" y="1.50" width="1.800" height="2.90" fill="#6a6a6a"/><path d="M4.55 4.2 H12.70 Q13.5 4.2 13.5 5.00 V8.90 Q13.5 9.7 12.70 9.7 H4.55 L1.5 6.95 Z" fill="#ababab" stroke="#404040" stroke-width="1.400" paint-order="stroke"/><circle cx="4.45" cy="6.95" r="0.900" fill="#404040"/><rect x="9.90" y="5.50" width="1.800" height="2.90" fill="#6a6a6a"/><path d="M6.80 8.6 H14.50 Q15.3 8.6 15.3 9.40 V14.80 Q15.3 15.6 14.50 15.6 H6.80 L3 12.1 Z" fill="#afafaf" stroke="#404040" stroke-width="1.400" paint-order="stroke"/><circle cx="6.70" cy="12.10" r="0.900" fill="#404040"/><rect x="11.70" y="9.90" width="1.800" height="4.40" fill="#6a6a6a"/></svg></div><div style="position:absolute;left:64.0px;top:410px;width:16px;height:16px"><svg width="16" height="16" viewBox="1023 90 48 48" style="display:block;overflow:visible">
<path d="M1034.600 90.500 H1046.800 V127 H1052.500 L1040.700 137.500 L1029 127 H1034.600 Z" fill="#bdbdbd"/>
<rect x="1034.600" y="106.500" width="12.200" height="2.600" fill="#9a9a9a"/>
<circle cx="1053.300" cy="109.300" r="6.300" fill="#8a8a8a"/>
<path d="M1044 97.100 H1053 A12.100 12.100 0 0 1 1053 121.300 H1047 V125.700 L1037.600 119 L1047 112.300 V116.500 H1053 A7.300 7.300 0 0 0 1053 102 H1044 Z" fill="#f0f0f0" stroke="#353535" stroke-width="1.200"/>
</svg></div><div style="position:absolute;left:64.0px;top:437px;width:16px;height:16px"><svg width="16" height="16" viewBox="1119 90 48 48" style="display:block;overflow:visible">
<g>
<path d="M1120 126 L1120 130.500 Q1120 132.500 1122 133.300 L1141 138 Q1142.500 138.300 1144 137.300 L1166.500 121 V116 Z" fill="#9a9a9a"/>
<path d="M1122 124.500 L1141.500 131 L1163 114.500 V119.500 L1141.500 135.700 L1122 129.500 Z" fill="#f0f0f0"/>
<path d="M1120 116 L1120 122 Q1120 124 1122 124.800 L1141 130 Q1142.500 130.300 1144 129.300 L1166.500 113 V108 Z" fill="#8a8a8a"/>
<path d="M1122 116.500 L1141.500 123 L1163 106.500 V111.500 L1141.500 127.700 L1122 121.500 Z" fill="#f0f0f0"/>
<path d="M1120 109 L1120 113.500 Q1120 115.500 1122 116.300 L1141 121.500 Q1142.500 121.800 1144 120.800 L1166.500 104.500 V100 Z" fill="#8a8a8a"/>
<path d="M1122 108.500 L1141.500 115 L1163 98.500 V103.500 L1141.500 119.700 L1122 113.500 Z" fill="#f0f0f0"/>
<path d="M1121.500 106 L1139 91.500 Q1141 90 1143.500 90.700 L1162 96.200 Q1164.500 97.200 1162.500 99 L1143 113.500 Q1141.500 114.300 1139.500 113.800 L1122 109.500 Q1119.500 108.300 1121.500 106 Z" fill="#8a8a8a"/>
<text transform="translate(1130.500,99.500) rotate(21) skewX(-30)" font-family="Liberation Sans, sans-serif" font-size="9.500" fill="#f0f0f0">FUN</text>
</g>
</svg></div><div style="position:absolute;left:64.0px;top:464px;width:16px;height:16px"><svg width="16" height="16" viewBox="1405 89 48 48" style="display:block;overflow:visible">
<rect x="1405" y="90" width="2.800" height="33" fill="#a2a2a2"/>
<g fill="none" stroke="#a2a2a2" stroke-width="2.300">
<path d="M1408 96 H1411 M1411 92 V100 M1418 92 V100 M1418 96 H1428 M1428 92 V100 M1440 92 V100 M1440 96 H1452.500"/>
<path d="M1408 108.500 H1411 M1411 104.500 V112.500 M1418 104.500 V112.500 M1423 96 V110"/>
</g>
<ellipse cx="1435" cy="119" rx="17.800" ry="15" fill="#353535"/>
<path d="M1435 105.800 C1444.500 105.800 1451 111.500 1451 119 C1451 126.500 1444.500 132 1435 132 C1433 132 1431.500 131.800 1430 131.400 C1427.500 134 1424 135.800 1420.300 136 C1422.500 133.500 1423.300 131 1423.300 128.300 C1420.500 126 1419 122.800 1419 119 C1419 111.500 1425.500 105.800 1435 105.800 Z" fill="#f0f0f0"/>
<path d="M1427 115.600 H1443 M1427 122.300 H1443" stroke="#2e2e2e" stroke-width="1.700"/>
</svg></div><svg style="position:absolute;left:46.8px;top:462px" width="12" height="10" viewBox="0 0 12 10"><path d="M1.6 2.4 L6 6.8 L10.4 2.4" fill="none" stroke="#fff" stroke-width="1.9"/></svg><div style="position:absolute;left:94.0px;top:491px;width:16px;height:16px"><svg width="16" height="16" viewBox="0 0 16 16" style="display:block;overflow:visible">
<rect x="0.300" y="1.300" width="10" height="1.900" fill="#c4c4c4"/>
<rect x="0.300" y="6.300" width="5.500" height="1.700" fill="#c4c4c4"/>
<rect x="0.300" y="11" width="5.500" height="1.700" fill="#c4c4c4"/>
<ellipse cx="10.6" cy="9.4" rx="5.80" ry="5.02" fill="#404040"/><path d="M6.68 10.87 L5.94 15.38 L10.36 13.32 Z" fill="#e6e6e6"/><ellipse cx="10.6" cy="9.4" rx="4.90" ry="4.12" fill="#e6e6e6"/><path d="M8.20 8.30 h4.800 M8.20 10.50 h4.800" stroke="#5a5a5a" stroke-width="0.900"/></svg></div><div style="position:absolute;left:94.0px;top:518px;width:16px;height:16px"><svg width="16" height="16" viewBox="0 0 16 16" style="display:block;overflow:visible">
<path d="M0.700 0.500 V14.500" stroke="#a8a8a8" stroke-width="1.100"/>
<path d="M1 3 H15 M1 7 H6 M1 11 H5 M3.200 1.600 V4.400 M5.200 1.600 V4.400 M8 1.600 V4.400 M10 1.600 V4.400 M12.500 1.600 V4.400 M3.200 5.600 V8.400 M5.200 5.600 V8.400 M3.200 9.600 V12.400 M5.200 9.600 V12.400 M14.500 3 V5" stroke="#a8a8a8" stroke-width="0.900" fill="none"/>
<ellipse cx="11.2" cy="9.6" rx="5.50" ry="4.76" fill="#404040"/><path d="M7.52 10.98 L6.83 15.21 L10.97 13.28 Z" fill="#e6e6e6"/><ellipse cx="11.2" cy="9.6" rx="4.60" ry="3.86" fill="#e6e6e6"/><path d="M8.80 8.50 h4.800 M8.80 10.70 h4.800" stroke="#5a5a5a" stroke-width="0.900"/></svg></div><div style="position:absolute;left:94.0px;top:545px;width:16px;height:16px"><svg width="16" height="16" viewBox="0 0 16 16" style="display:block;overflow:visible">
<path d="M0.300 4.200 H3.700 M8 4.200 H11.500" stroke="#c4c4c4" stroke-width="1.300"/>
<path d="M4.200 0.600 V8 M7.500 0.600 V8" stroke="#c4c4c4" stroke-width="1.500"/>
<ellipse cx="11.2" cy="10.3" rx="5.40" ry="4.68" fill="#404040"/><path d="M7.60 11.65 L6.92 15.79 L10.97 13.90 Z" fill="#e6e6e6"/><ellipse cx="11.2" cy="10.3" rx="4.50" ry="3.78" fill="#e6e6e6"/><path d="M8.80 9.20 h4.800 M8.80 11.40 h4.800" stroke="#5a5a5a" stroke-width="0.900"/></svg></div><div style="position:absolute;left:64.0px;top:572px;width:16px;height:16px"><svg width="16" height="16" viewBox="1515 90 48 48" style="display:block;overflow:visible">
<path d="M1516 97.500 Q1516 95.500 1518 95.500 L1538 96.500 L1557.500 116 Q1559.500 118.500 1557.500 121 L1543.500 136.500 Q1541.500 138.500 1539 136.500 L1516.500 115 Z" fill="#a2a2a2"/>
<circle cx="1525" cy="105" r="3.700" fill="#353535"/>
<path d="M1517.500 96.500 L1524 103.500" stroke="#353535" stroke-width="1.300"/>
<path d="M1536.500 125 L1549 112.500 M1540.500 129.500 L1553 117" stroke="#353535" stroke-width="1.400"/>
<circle cx="1549" cy="101.800" r="14.800" fill="#353535"/>
<path d="M1546.64 92.29 L1546.87 88.98 L1551.13 88.98 L1551.36 92.29 L1554.05 93.40 L1556.56 91.22 L1559.58 94.24 L1557.40 96.75 L1558.51 99.44 L1561.82 99.67 L1561.82 103.93 L1558.51 104.16 L1557.40 106.85 L1559.58 109.36 L1556.56 112.38 L1554.05 110.20 L1551.36 111.31 L1551.13 114.62 L1546.87 114.62 L1546.64 111.31 L1543.95 110.20 L1541.44 112.38 L1538.42 109.36 L1540.60 106.85 L1539.49 104.16 L1536.18 103.93 L1536.18 99.67 L1539.49 99.44 L1540.60 96.75 L1538.42 94.24 L1541.44 91.22 L1543.95 93.40 Z M1543.20 101.80 a5.80 5.80 0 1 0 11.60 0 a5.80 5.80 0 1 0 -11.60 0 Z" fill="#a2a2a2" fill-rule="evenodd"/>
</svg></div><svg style="position:absolute;left:46.8px;top:570px" width="12" height="10" viewBox="0 0 12 10"><path d="M1.6 2.4 L6 6.8 L10.4 2.4" fill="none" stroke="#fff" stroke-width="1.9"/></svg><div style="position:absolute;left:94.0px;top:599px;width:16px;height:16px"><svg width="16" height="16" viewBox="0 0 16 16" style="display:block;overflow:visible"><path d="M3.35 0.2 H11.00 Q11.8 0.2 11.8 1.00 V4.90 Q11.8 5.7 11.00 5.7 H3.35 L0.3 2.95 Z" fill="#ababab"/><circle cx="3.25" cy="2.95" r="0.900" fill="#404040"/><rect x="8.20" y="1.50" width="1.800" height="2.90" fill="#6a6a6a"/><path d="M4.55 4.2 H12.70 Q13.5 4.2 13.5 5.00 V8.90 Q13.5 9.7 12.70 9.7 H4.55 L1.5 6.95 Z" fill="#ababab" stroke="#404040" stroke-width="1.400" paint-order="stroke"/><circle cx="4.45" cy="6.95" r="0.900" fill="#404040"/><rect x="9.90" y="5.50" width="1.800" height="2.90" fill="#6a6a6a"/><path d="M6.80 8.6 H14.50 Q15.3 8.6 15.3 9.40 V14.80 Q15.3 15.6 14.50 15.6 H6.80 L3 12.1 Z" fill="#afafaf" stroke="#404040" stroke-width="1.400" paint-order="stroke"/><circle cx="6.70" cy="12.10" r="0.900" fill="#404040"/><rect x="11.70" y="9.90" width="1.800" height="4.40" fill="#6a6a6a"/></svg></div><svg style="position:absolute;left:76.8px;top:597px" width="12" height="10" viewBox="0 0 12 10"><path d="M1.6 2.4 L6 6.8 L10.4 2.4" fill="none" stroke="#fff" stroke-width="1.9"/></svg><div style="position:absolute;left:124.0px;top:626px;width:16px;height:16px"><svg width="16" height="16" viewBox="0 0 16 16" style="display:block;overflow:visible"><path d="M3.35 0.2 H11.00 Q11.8 0.2 11.8 1.00 V4.90 Q11.8 5.7 11.00 5.7 H3.35 L0.3 2.95 Z" fill="#ababab"/><circle cx="3.25" cy="2.95" r="0.900" fill="#404040"/><rect x="8.20" y="1.50" width="1.800" height="2.90" fill="#6a6a6a"/><path d="M4.55 4.2 H12.70 Q13.5 4.2 13.5 5.00 V8.90 Q13.5 9.7 12.70 9.7 H4.55 L1.5 6.95 Z" fill="#ababab" stroke="#404040" stroke-width="1.400" paint-order="stroke"/><circle cx="4.45" cy="6.95" r="0.900" fill="#404040"/><rect x="9.90" y="5.50" width="1.800" height="2.90" fill="#6a6a6a"/><path d="M6.80 8.6 H14.50 Q15.3 8.6 15.3 9.40 V14.80 Q15.3 15.6 14.50 15.6 H6.80 L3 12.1 Z" fill="#afafaf" stroke="#404040" stroke-width="1.400" paint-order="stroke"/><circle cx="6.70" cy="12.10" r="0.900" fill="#404040"/><rect x="11.70" y="9.90" width="1.800" height="4.40" fill="#6a6a6a"/></svg></div><div style="position:absolute;left:124.0px;top:653px;width:16px;height:16px"><svg width="16" height="16" viewBox="0 0 16 16" style="display:block;overflow:visible"><path d="M3.35 0.2 H11.00 Q11.8 0.2 11.8 1.00 V4.90 Q11.8 5.7 11.00 5.7 H3.35 L0.3 2.95 Z" fill="#ababab"/><circle cx="3.25" cy="2.95" r="0.900" fill="#404040"/><rect x="8.20" y="1.50" width="1.800" height="2.90" fill="#6a6a6a"/><path d="M4.55 4.2 H12.70 Q13.5 4.2 13.5 5.00 V8.90 Q13.5 9.7 12.70 9.7 H4.55 L1.5 6.95 Z" fill="#ababab" stroke="#404040" stroke-width="1.400" paint-order="stroke"/><circle cx="4.45" cy="6.95" r="0.900" fill="#404040"/><rect x="9.90" y="5.50" width="1.800" height="2.90" fill="#6a6a6a"/><path d="M6.80 8.6 H14.50 Q15.3 8.6 15.3 9.40 V14.80 Q15.3 15.6 14.50 15.6 H6.80 L3 12.1 Z" fill="#afafaf" stroke="#404040" stroke-width="1.400" paint-order="stroke"/><circle cx="6.70" cy="12.10" r="0.900" fill="#404040"/><rect x="11.70" y="9.90" width="1.800" height="4.40" fill="#6a6a6a"/></svg></div><div style="position:absolute;left:94.0px;top:680px;width:16px;height:16px"><svg width="16" height="16" viewBox="0 0 16 16" style="display:block;overflow:visible">
<ellipse cx="5.500" cy="2.800" rx="5.300" ry="2.500" fill="#a8a8a8"/>
<path d="M0.200 4.200 Q5.500 7.800 10.800 4.200 V7 Q5.500 10.600 0.200 7 Z" fill="#999"/>
<path d="M0.200 8.200 Q5.500 11.800 10.800 8.200 V11 Q5.500 14.600 0.200 11 Z" fill="#999"/>
<path d="M4 4.300 L10 3.600 L17.300 11.200 L11.800 17 L4.300 10 Z" fill="#404040"/>
<path d="M5.200 5.400 L9.600 4.900 L15.900 11.300 L11.800 15.500 L5.400 9.600 Z" fill="#b2b2b2"/>
<circle cx="7.300" cy="7" r="0.900" fill="#404040"/>
<path d="M10.800 11.800 L12.800 9.800 L14 11 L12 13 Z" fill="none" stroke="#6e6e6e" stroke-width="0.700"/>
</svg></div><div style="position:absolute;left:64.0px;top:707px;width:16px;height:16px"><svg width="16" height="16" viewBox="1293 90 48 48" style="display:block;overflow:visible">
<rect x="1294.500" y="91" width="34.500" height="9.300" fill="#919191"/>
<rect x="1294.500" y="102" width="34.500" height="21" fill="#ececec"/>
<path d="M1299 107 H1305.500 M1299 112.500 H1305.500 M1299 118 H1305.500" stroke="#2e2e2e" stroke-width="1.500"/>
<circle cx="1320" cy="119.600" r="14.300" fill="#353535"/>
<path d="M1329 129 L1337 135.500" stroke="#8e8e8e" stroke-width="3.600" stroke-linecap="round"/>
<circle cx="1320" cy="119.600" r="12.600" fill="#8e8e8e"/>
<path d="M1313.800 119.600 H1326.200 M1320 113.400 V125.800" stroke="#fff" stroke-width="2.600"/>
</svg></div><svg style="position:absolute;left:46.8px;top:705px" width="12" height="10" viewBox="0 0 12 10"><path d="M1.6 2.4 L6 6.8 L10.4 2.4" fill="none" stroke="#fff" stroke-width="1.9"/></svg><div style="position:absolute;left:94.0px;top:734px;width:16px;height:16px"><svg width="16" height="16" viewBox="1293 90 48 48" style="display:block;overflow:visible">
<rect x="1294.500" y="91" width="34.500" height="9.300" fill="#919191"/>
<rect x="1294.500" y="102" width="34.500" height="21" fill="#ececec"/>
<path d="M1299 107 H1305.500 M1299 112.500 H1305.500 M1299 118 H1305.500" stroke="#2e2e2e" stroke-width="1.500"/>
<circle cx="1320" cy="119.600" r="14.300" fill="#353535"/>
<path d="M1329 129 L1337 135.500" stroke="#8e8e8e" stroke-width="3.600" stroke-linecap="round"/>
<circle cx="1320" cy="119.600" r="12.600" fill="#8e8e8e"/>
<path d="M1313.800 119.600 H1326.200 M1320 113.400 V125.800" stroke="#fff" stroke-width="2.600"/>
</svg></div><div style="position:absolute;left:64.0px;top:761px;width:16px;height:16px"><svg width="16" height="16" viewBox="0 0 16 16" style="display:block;overflow:visible"><g transform="translate(0,3.300) scale(1,0.780)">
<path d="M0 8.500 L2.500 7 V10 Z" fill="#e6e6e6"/>
<rect x="2" y="7.800" width="3.500" height="1.500" fill="#e6e6e6"/>
<path d="M4.600 5.500 L5.800 4.300 V12.700 L4.600 11.500 Z" fill="#e6e6e6"/>
<rect x="6.400" y="3" width="8.200" height="10.500" rx="1.200" fill="#e6e6e6"/>
<rect x="15" y="4.500" width="1" height="7.500" fill="#e6e6e6"/>
<rect x="8.800" y="0.500" width="3.200" height="2.500" fill="#e6e6e6"/>
<rect x="5.500" y="14" width="10" height="1.500" fill="#e6e6e6"/>
<path d="M7.500 5.400 H13.600 M7.500 7.600 H13.600 M7.500 9.800 H13.600 M7.500 12 H13.600" stroke="#404040" stroke-width="1"/>
<path d="M10.400 3.500 V13" stroke="#404040" stroke-width="0.600"/>
</g></svg></div><svg style="position:absolute;left:46.8px;top:759px" width="12" height="10" viewBox="0 0 12 10"><path d="M1.6 2.4 L6 6.8 L10.4 2.4" fill="none" stroke="#fff" stroke-width="1.9"/></svg><div style="position:absolute;left:116px;top:783px;width:590px;height:27px;background:#4aa5ff"></div><div style="position:absolute;left:94.0px;top:788px;width:16px;height:16px"><svg width="16" height="16" viewBox="0 0 16 16" style="display:block;overflow:visible">
<rect x="0.500" y="0.300" width="5" height="1.100" fill="#c4c4c4"/>
<rect x="0.800" y="2.700" width="4.400" height="5.400" fill="none" stroke="#e6e6e6" stroke-width="1"/>
<path d="M2.500 8.500 V11.500 H5.500" stroke="#a8a8a8" stroke-width="0.900" fill="none"/>
<rect x="5.700" y="9" width="3.300" height="7" fill="#e6e6e6"/><rect x="9.800" y="9" width="3" height="7" fill="#e6e6e6"/><rect x="13.500" y="9" width="2.500" height="7" fill="#e6e6e6"/>
<path d="M5.700 11.200 H16" stroke="#404040" stroke-width="0.700"/>
</svg></div><div style="position:absolute;left:94.0px;top:815px;width:16px;height:16px"><svg width="16" height="16" viewBox="0 0 16 16" style="display:block;overflow:visible"><g transform="translate(0,3.300) scale(1,0.780)">
<path d="M0 8.500 L2.500 7 V10 Z" fill="#e6e6e6"/>
<rect x="2" y="7.800" width="3.500" height="1.500" fill="#e6e6e6"/>
<path d="M4.600 5.500 L5.800 4.300 V12.700 L4.600 11.500 Z" fill="#e6e6e6"/>
<rect x="6.400" y="3" width="8.200" height="10.500" rx="1.200" fill="#e6e6e6"/>
<rect x="15" y="4.500" width="1" height="7.500" fill="#e6e6e6"/>
<rect x="8.800" y="0.500" width="3.200" height="2.500" fill="#e6e6e6"/>
<rect x="5.500" y="14" width="10" height="1.500" fill="#e6e6e6"/>
<path d="M7.500 5.400 H13.600 M7.500 7.600 H13.600 M7.500 9.800 H13.600 M7.500 12 H13.600" stroke="#404040" stroke-width="1"/>
<path d="M10.400 3.500 V13" stroke="#404040" stroke-width="0.600"/>
</g></svg></div><div style="position:absolute;left:94.0px;top:842px;width:16px;height:16px"><svg width="16" height="16" viewBox="0 0 16 16" style="display:block;overflow:visible">
<path d="M1.700 1.500 V14.300 H15" stroke="#bcbcbc" stroke-width="0.900" fill="none"/>
<path d="M0.500 2.800 L1.700 0.500 L2.900 2.800 Z M13.700 13.100 L16 14.300 L13.700 15.500 Z" fill="#d0d0d0"/>
<path d="M4 13 C4 3.500 13 3.500 14 13" stroke="#cfcfcf" stroke-width="1" fill="none"/>
<path d="M5 10 H10.500" stroke="#e0e0e0" stroke-width="1.200"/><path d="M10 8.600 L12 10 L10 11.400 Z" fill="#e0e0e0"/>
</svg></div><div style="position:absolute;left:94.0px;top:869px;width:16px;height:16px"><svg width="16" height="16" viewBox="0 0 16 16" style="display:block;overflow:visible">
<g fill="none" stroke="#a4a4a4" stroke-width="0.900">
<rect x="6" y="0.500" width="4.500" height="4.500"/><path d="M8.200 5 V14 M2.500 9 V8 H14 V9"/>
<rect x="0.500" y="9.200" width="4" height="2.800"/><rect x="6.200" y="9.200" width="4" height="2.800" fill="#404040"/><rect x="12" y="9.200" width="4" height="2.800"/>
<rect x="5.200" y="14" width="6" height="2.500" fill="#404040"/>
</g>
<path d="M7 1.800 H9.500 V3.500" stroke="#c8c8c8" stroke-width="0.800" fill="none"/>
</svg></div><div style="position:absolute;left:94.0px;top:896px;width:16px;height:16px"><svg width="16" height="16" viewBox="0 0 16 16" style="display:block;overflow:visible"><path d="M4.84 1.72 L4.88 0.08 L6.72 0.08 L6.76 1.72 L7.86 2.17 L9.06 1.04 L10.36 2.34 L9.23 3.54 L9.68 4.64 L11.32 4.68 L11.32 6.52 L9.68 6.56 L9.23 7.66 L10.36 8.86 L9.06 10.16 L7.86 9.03 L6.76 9.48 L6.72 11.12 L4.88 11.12 L4.84 9.48 L3.74 9.03 L2.54 10.16 L1.24 8.86 L2.37 7.66 L1.92 6.56 L0.28 6.52 L0.28 4.68 L1.92 4.64 L2.37 3.54 L1.24 2.34 L2.54 1.04 L3.74 2.17 Z M3.10 5.60 a2.70 2.70 0 1 0 5.40 0 a2.70 2.70 0 1 0 -5.40 0 Z" fill="#e6e6e6" fill-rule="evenodd"/><path d="M11.55 9.38 L11.58 8.25 L12.82 8.25 L12.85 9.38 L13.59 9.69 L14.41 8.91 L15.29 9.79 L14.51 10.61 L14.82 11.35 L15.95 11.38 L15.95 12.62 L14.82 12.65 L14.51 13.39 L15.29 14.21 L14.41 15.09 L13.59 14.31 L12.85 14.62 L12.82 15.75 L11.58 15.75 L11.55 14.62 L10.81 14.31 L9.99 15.09 L9.11 14.21 L9.89 13.39 L9.58 12.65 L8.45 12.62 L8.45 11.38 L9.58 11.35 L9.89 10.61 L9.11 9.79 L9.99 8.91 L10.81 9.69 Z M10.50 12.00 a1.70 1.70 0 1 0 3.40 0 a1.70 1.70 0 1 0 -3.40 0 Z" fill="#cfcfcf" fill-rule="evenodd"/></svg></div><svg style="position:absolute;left:76.8px;top:894px" width="12" height="10" viewBox="0 0 12 10"><path d="M1.6 2.4 L6 6.8 L10.4 2.4" fill="none" stroke="#fff" stroke-width="1.9"/></svg><div style="position:absolute;left:124.0px;top:923px;width:16px;height:16px"><svg width="16" height="16" viewBox="0 0 16 16" style="display:block;overflow:visible"><path d="M4.84 1.72 L4.88 0.08 L6.72 0.08 L6.76 1.72 L7.86 2.17 L9.06 1.04 L10.36 2.34 L9.23 3.54 L9.68 4.64 L11.32 4.68 L11.32 6.52 L9.68 6.56 L9.23 7.66 L10.36 8.86 L9.06 10.16 L7.86 9.03 L6.76 9.48 L6.72 11.12 L4.88 11.12 L4.84 9.48 L3.74 9.03 L2.54 10.16 L1.24 8.86 L2.37 7.66 L1.92 6.56 L0.28 6.52 L0.28 4.68 L1.92 4.64 L2.37 3.54 L1.24 2.34 L2.54 1.04 L3.74 2.17 Z M3.10 5.60 a2.70 2.70 0 1 0 5.40 0 a2.70 2.70 0 1 0 -5.40 0 Z" fill="#e6e6e6" fill-rule="evenodd"/><path d="M11.55 9.38 L11.58 8.25 L12.82 8.25 L12.85 9.38 L13.59 9.69 L14.41 8.91 L15.29 9.79 L14.51 10.61 L14.82 11.35 L15.95 11.38 L15.95 12.62 L14.82 12.65 L14.51 13.39 L15.29 14.21 L14.41 15.09 L13.59 14.31 L12.85 14.62 L12.82 15.75 L11.58 15.75 L11.55 14.62 L10.81 14.31 L9.99 15.09 L9.11 14.21 L9.89 13.39 L9.58 12.65 L8.45 12.62 L8.45 11.38 L9.58 11.35 L9.89 10.61 L9.11 9.79 L9.99 8.91 L10.81 9.69 Z M10.50 12.00 a1.70 1.70 0 1 0 3.40 0 a1.70 1.70 0 1 0 -3.40 0 Z" fill="#cfcfcf" fill-rule="evenodd"/></svg></div><div style="position:absolute;left:124.0px;top:950px;width:16px;height:16px"><svg width="16" height="16" viewBox="0 0 16 16" style="display:block;overflow:visible">
<path d="M0 7 H3 M12.500 7 H16" stroke="#c4c4c4" stroke-width="1.300"/>
<path d="M3.300 0 V13 M11.700 0 V13" stroke="#c4c4c4" stroke-width="2.400"/>
<path d="M12 2.500 H15" stroke="#c4c4c4" stroke-width="1.200"/>
</svg></div></div>
<div id="split"></div>
<div id="right"></div>
<div class="abs" style="left:709px;top:228px;width:151px;height:32px;background:#f0f0f0"></div>
<svg style="position:absolute;left:709px;top:228px;" width="938" height="40" viewBox="0 0 938 40">
<defs><linearGradient id="gld" x1="0" y1="0" x2="1" y2="0"><stop offset="0" stop-color="#fdfdfd"/><stop offset="0.45" stop-color="#dcdcdc"/><stop offset="1" stop-color="#8c8c8c"/></linearGradient></defs>
<path d="M141.500 0 L149.800 16 L141.500 32 H363.800 V0 Z" fill="#72b9fe"/>
<path d="M141.500 0 L149.800 16 L141.500 32" fill="none" stroke="#000" stroke-width="1.5"/>
<path d="M363.800 0 V32.500" stroke="#000" stroke-width="1.600"/>
<rect x="1" y="32" width="363.600" height="1" fill="#000"/>
<rect x="365" y="32" width="573" height="1" fill="#9c9c9c"/>
<rect x="1" y="33" width="937" height="1" fill="#f4f4f4"/>
<rect x="1" y="34" width="937" height="2" fill="#e3e3e3"/>
<rect x="1" y="33" width="1" height="7" fill="#a8a8a8"/>
<!-- Main0 doc icon -->
<path d="M15.500 5.500 Q14.500 5.500 14.500 6.500 V27.500 Q14.500 28.500 15.500 28.500 H32.500 Q33.500 28.500 33.500 27.500 V11.500 L27.500 5.500 Z" fill="url(#gld)" stroke="#4a4a4a" stroke-width="1"/>
<path d="M27.500 5.500 V11.500 H33.500 Z" fill="#f4f4f4" stroke="#4a4a4a" stroke-width="0.800"/>
<path d="M14.500 18.500 H20.500 M25.500 18.500 H31.500" stroke="#1b6fd0" stroke-width="1.600"/>
<path d="M20.800 14.500 V22.500 M25.200 14.500 V22.500" stroke="#1b6fd0" stroke-width="1.900"/>
<!-- close X (Main0) -->
<path d="M105.300 13.300 L116.500 23.800 M116.500 13.300 L105.300 23.800" stroke="#8c8c8c" stroke-width="2.100"/>
<!-- close X (active) -->
<path d="M326.800 12.300 L338 22.800 M338 12.300 L326.800 22.800" stroke="#8593a3" stroke-width="2.100"/>
<!-- motion network icon -->
<rect x="155" y="4" width="8" height="3" fill="#1e9bff"/><rect x="155" y="7" width="8" height="8" fill="#9a9a9a"/>
<path d="M157 8.500 H159.500 L161.500 11 L159.500 13.500 H157 Z" fill="#f4f4f4"/>
<path d="M159.500 15 V21.500 H163" stroke="#9a9a9a" stroke-width="1" fill="none"/>
<rect x="163" y="16" width="4" height="3.500" fill="#0a62c4"/><rect x="169" y="16" width="4" height="3.500" fill="#0a62c4"/><rect x="174.500" y="16" width="4" height="3.500" fill="#0a62c4"/>
<rect x="163.500" y="19.500" width="3.500" height="8.500" fill="#c6beb6"/><rect x="169.500" y="19.500" width="3.500" height="8.500" fill="#c6beb6"/><rect x="175" y="19.500" width="3.500" height="8.500" fill="#c6beb6"/>
</svg>
<div class="abs" style="left:710px;top:264px;width:1px;height:944px;background:#a8a8a8"></div>
<div class="abs" style="left:711px;top:262px;width:2px;height:946px;background:#e6e6e6"></div>
<div class="abs" style="left:726px;top:277px;width:122px;height:36px;background:#e9e9e9;border:1px solid #b4b4b4"></div>
<svg style="position:absolute;left:728px;top:280px;" width="30" height="30" viewBox="0 0 30 30"><path d="M9.28 6.09 L9.39 3.72 L12.21 3.72 L12.32 6.09 L14.05 6.80 L15.80 5.20 L17.80 7.20 L16.20 8.95 L16.91 10.68 L19.28 10.79 L19.28 13.61 L16.91 13.72 L16.20 15.45 L17.80 17.20 L15.80 19.20 L14.05 17.60 L12.32 18.31 L12.21 20.68 L9.39 20.68 L9.28 18.31 L7.55 17.60 L5.80 19.20 L3.80 17.20 L5.40 15.45 L4.69 13.72 L2.32 13.61 L2.32 10.79 L4.69 10.68 L5.40 8.95 L3.80 7.20 L5.80 5.20 L7.55 6.80 Z M6.50 12.20 a4.30 4.30 0 1 0 8.60 0 a4.30 4.30 0 1 0 -8.60 0 Z" fill="#6e6e6e" fill-rule="evenodd"/><path d="M19.11 19.31 L19.15 17.77 L20.85 17.77 L20.89 19.31 L21.91 19.73 L23.02 18.67 L24.23 19.88 L23.17 20.99 L23.59 22.01 L25.13 22.05 L25.13 23.75 L23.59 23.79 L23.17 24.81 L24.23 25.92 L23.02 27.13 L21.91 26.07 L20.89 26.49 L20.85 28.03 L19.15 28.03 L19.11 26.49 L18.09 26.07 L16.98 27.13 L15.77 25.92 L16.83 24.81 L16.41 23.79 L14.87 23.75 L14.87 22.05 L16.41 22.01 L16.83 20.99 L15.77 19.88 L16.98 18.67 L18.09 19.73 Z M17.80 22.90 a2.20 2.20 0 1 0 4.40 0 a2.20 2.20 0 1 0 -4.40 0 Z" fill="#6e6e6e" fill-rule="evenodd"/></svg>
<div class="abs" style="left:727px;top:324px;width:920px;height:884px;background:#fff;border-left:1px solid #868686;border-top:1px solid #b4b4b4"></div>
<div class="abs" style="left:727px;top:325px;width:920px;height:1px;background:#828282"></div>
<div class="abs" style="left:728px;top:326px;width:1px;height:882px;background:#c4c4c4"></div>
<div class="abs" style="left:728px;top:361px;width:919px;height:1px;background:#868686"></div>
<svg style="position:absolute;left:756px;top:322px;" width="44" height="42" viewBox="0 0 44 42">
<defs>
<linearGradient id="cb1" x1="0" y1="0" x2="0" y2="1"><stop offset="0" stop-color="#3283d8"/><stop offset="0.55" stop-color="#0a4cc0"/><stop offset="1" stop-color="#0038b0"/></linearGradient>
<linearGradient id="cb2" x1="0" y1="0" x2="0" y2="1"><stop offset="0" stop-color="#2a7cd4"/><stop offset="1" stop-color="#0a46ba"/></linearGradient>
<linearGradient id="cb3" x1="0.3" y1="1" x2="0.7" y2="0"><stop offset="0" stop-color="#2f86dc"/><stop offset="1" stop-color="#58bdea"/></linearGradient>
</defs>
<path d="M3.700 12.500 Q3.700 11 5 10.500 L20 17 V38.300 Q18.800 38.600 17.500 38 L5 32.800 Q3.700 32.200 3.700 31 Z" fill="url(#cb1)"/>
<path d="M20 17 L40 10 V29.500 Q40 30.800 38.800 31.300 L20 38.300 Z" fill="url(#cb2)"/>
<path d="M5 10.500 L25.500 3.600 Q27 3.200 28.500 3.800 L39 8.300 Q40 9 40 10 L20 17 Z" fill="url(#cb3)"/>
<path d="M6.500 10.800 Q14 11.500 17.500 13.800 Q20 15.500 20 18.500 V38" stroke="#e4f0fc" stroke-width="1" fill="none"/>
<path d="M18.500 14.500 L39.800 8.800 M21 19.300 L39.800 13.300" stroke="#cfe4f8" stroke-width="0.900" fill="none"/>
<path d="M31.700 15.800 V28.300 L27 29.800 V35.300" stroke="#eef6fe" stroke-width="1.300" fill="none"/>
</svg>
<div id="edge" style="position:absolute;left:0;top:0;width:1px;height:1208px;background:linear-gradient(#aeaec0 0,#aeaec0 135px,#1a2540 136px,#1a2540 1007px,#00589f 1008px,#00589f 1032px,#1a2540 1033px,#c0c0c0 1034px)"></div>
<span class="t" style="left:90px;top:56.0px;font-size:18px;color:#f0f0f0;transform:scaleX(0.9594);">Project</span><span class="t" style="left:184px;top:56.0px;font-size:18px;color:#f0f0f0;transform:scaleX(0.9711);">Designer</span><span class="t" style="left:294px;top:56.0px;font-size:18px;color:#f0f0f0;transform:scaleX(0.8132);">PLC</span><span class="t" style="left:362px;top:56.0px;font-size:18px;color:#f0f0f0;transform:scaleX(0.9473);">View</span><span class="t" style="left:439px;top:56.0px;font-size:18px;color:#f0f0f0;transform:scaleX(0.9791);">Tools</span><span class="t" style="left:14px;top:146.0px;font-size:18px;color:#ececec;transform:scaleX(0.9484);">Device</span><span class="t" style="left:22px;top:171.0px;font-size:18px;color:#ececec;transform:scaleX(0.9126);">View</span><span class="t" style="left:126px;top:146.0px;font-size:18px;color:#ececec;transform:scaleX(1.1428);">I/O</span><span class="t" style="left:85px;top:171.0px;font-size:18px;color:#ececec;transform:scaleX(1.0255);">Configuration</span><span class="t" style="left:226px;top:146.0px;font-size:18px;color:#ececec;transform:scaleX(1.0397);">Memory</span><span class="t" style="left:221px;top:171.0px;font-size:18px;color:#ececec;transform:scaleX(1.0198);">Allocation</span><span class="t" style="left:318px;top:146.0px;font-size:18px;color:#ececec;transform:scaleX(0.9610);">Read-Only</span><span class="t" style="left:328px;top:171.0px;font-size:18px;color:#ececec;transform:scaleX(0.9376);">Register</span><span class="t" style="left:448px;top:146.0px;font-size:18px;color:#ececec;transform:scaleX(0.9349);">Server</span><span class="t" style="left:419px;top:171.0px;font-size:18px;color:#ececec;transform:scaleX(1.0225);">Configuration</span><span class="t" style="left:547px;top:146.0px;font-size:18px;color:#ececec;transform:scaleX(1.0122);">Communication</span><span class="t" style="left:555px;top:171.0px;font-size:18px;color:#ececec;transform:scaleX(1.0207);">Configuration</span><span class="t" style="left:706px;top:146.0px;font-size:18px;color:#ececec;transform:scaleX(0.9458);">Element</span><span class="t" style="left:685px;top:171.0px;font-size:18px;color:#ececec;transform:scaleX(1.0604);">Information</span><span class="t" style="left:834px;top:146.0px;font-size:18px;color:#ececec;transform:scaleX(1.0380);">Main</span><span class="t" style="left:815px;top:171.0px;font-size:18px;color:#ececec;transform:scaleX(1.0055);">Program</span><span class="t" style="left:934px;top:146.0px;font-size:18px;color:#ececec;transform:scaleX(1.0063);">Sub</span><span class="t" style="left:911px;top:171.0px;font-size:18px;color:#ececec;transform:scaleX(1.0082);">Program</span><span class="t" style="left:1018px;top:146.0px;font-size:18px;color:#ececec;transform:scaleX(0.9538);">Special</span><span class="t" style="left:1007px;top:171.0px;font-size:18px;color:#ececec;transform:scaleX(1.0095);">Program</span><span class="t" style="left:1125px;top:146.0px;font-size:18px;color:#ececec;transform:scaleX(0.9351);">FCM</span><span class="t" style="left:1103px;top:171.0px;font-size:18px;color:#ececec;transform:scaleX(1.0111);">Program</span><span class="t" style="left:1209px;top:146.0px;font-size:18px;color:#ececec;transform:scaleX(0.9143);">Table</span><span class="t" style="left:1208px;top:171.0px;font-size:18px;color:#ececec;transform:scaleX(0.9510);">Edit</span><span class="t" style="left:1292px;top:146.0px;font-size:18px;color:#ececec;transform:scaleX(0.9378);">Status</span><span class="t" style="left:1292px;top:171.0px;font-size:18px;color:#ececec;transform:scaleX(0.8986);">Page</span><span class="t" style="left:1385px;top:146.0px;font-size:18px;color:#ececec;">Comments</span><span class="t" style="left:1526px;top:146.0px;font-size:18px;color:#ececec;transform:scaleX(0.9116);">Tag</span><span class="t" style="left:1506px;top:171.0px;font-size:18px;color:#ececec;transform:scaleX(0.9746);">Library</span><span class="t" style="left:1637px;top:146.0px;font-size:18px;color:#ececec;transform:scaleX(0.9538);">Element</span><span class="t" style="left:1629px;top:171.0px;font-size:18px;color:#ececec;transform:scaleX(1.0850);">Monitor</span><span class="t" style="left:316px;top:200.0px;font-size:18px;color:#ececec;transform:scaleX(1.0051);">System Configuration</span><span class="t" style="left:945px;top:200.0px;font-size:18px;color:#ececec;transform:scaleX(0.9952);">Program Unit</span><span class="t" style="left:1208px;top:200.0px;font-size:18px;color:#ececec;transform:scaleX(0.9083);">Table</span><span class="t" style="left:1270px;top:200.0px;font-size:18px;color:#ececec;transform:scaleX(0.9261);">Status Page</span><span class="t" style="left:1388px;top:200.0px;font-size:18px;color:#ececec;transform:scaleX(1.0141);">Comment</span><span class="t" style="left:1497px;top:200.0px;font-size:18px;color:#ececec;transform:scaleX(0.9406);">Tag Library</span><span class="t" style="left:1600px;top:200.0px;font-size:18px;color:#ececec;transform:scaleX(1.0381);">Element Monitor</span><span class="t" style="left:57px;top:258.0px;font-size:18px;color:#f0f0f0;transform:scaleX(0.9773);z-index:3;">Tut01 [ME2C4-1616]</span><span class="t" style="left:86px;top:285.0px;font-size:18px;color:#f0f0f0;transform:scaleX(0.9921);z-index:3;">System Configuration</span><span class="t" style="left:116px;top:312.0px;font-size:18px;color:#f0f0f0;transform:scaleX(0.9472);z-index:3;">Device View</span><span class="t" style="left:115px;top:339.0px;font-size:18px;color:#f0f0f0;transform:scaleX(1.0403);z-index:3;">I/O Configuration</span><span class="t" style="left:115px;top:366.0px;font-size:18px;color:#f0f0f0;transform:scaleX(1.0377);z-index:3;">Memory Allocation</span><span class="t" style="left:116px;top:393.0px;font-size:18px;color:#f0f0f0;transform:scaleX(0.9530);z-index:3;">Read-Only Register</span><span class="t" style="left:116px;top:420.0px;font-size:18px;color:#f0f0f0;transform:scaleX(0.9905);z-index:3;">Server Configuration</span><span class="t" style="left:116px;top:447.0px;font-size:18px;color:#f0f0f0;transform:scaleX(1.0151);z-index:3;">Communication Configuration</span><span class="t" style="left:86px;top:474.0px;font-size:18px;color:#f0f0f0;transform:scaleX(0.9938);z-index:3;">Program Unit</span><span class="t" style="left:116px;top:501.0px;font-size:18px;color:#f0f0f0;z-index:3;">Main Program</span><span class="t" style="left:146px;top:528.0px;font-size:18px;color:#f0f0f0;transform:scaleX(1.0062);z-index:3;">Main0</span><span class="t" style="left:177px;top:555.0px;font-size:18px;color:#f0f0f0;transform:scaleX(0.9193);z-index:3;">Tag</span><span class="t" style="left:116px;top:582.0px;font-size:18px;color:#f0f0f0;transform:scaleX(0.9953);z-index:3;">Sub Program</span><span class="t" style="left:146px;top:609.0px;font-size:18px;color:#f0f0f0;transform:scaleX(0.9782);z-index:3;">Sub0</span><span class="t" style="left:177px;top:636.0px;font-size:18px;color:#f0f0f0;transform:scaleX(0.9193);z-index:3;">Tag</span><span class="t" style="left:86px;top:663.0px;font-size:18px;color:#f0f0f0;transform:scaleX(0.9741);z-index:3;">Special Program</span><span class="t" style="left:86px;top:690.0px;font-size:18px;color:#f0f0f0;transform:scaleX(0.9818);z-index:3;">FCM Program</span><span class="t" style="left:86px;top:717.0px;font-size:18px;color:#f0f0f0;transform:scaleX(1.0093);z-index:3;">Comment</span><span class="t" style="left:116px;top:744.0px;font-size:18px;color:#f0f0f0;z-index:3;">Program Unit Comment</span><span class="t" style="left:116px;top:771.0px;font-size:18px;color:#f0f0f0;transform:scaleX(1.0127);z-index:3;">Network Comment</span><span class="t" style="left:116px;top:798.0px;font-size:18px;color:#f0f0f0;transform:scaleX(0.9848);z-index:3;">Element Comment</span><span class="t" style="left:87px;top:825.0px;font-size:18px;color:#f0f0f0;transform:scaleX(0.9408);z-index:3;">Tag Library</span><span class="t" style="left:117px;top:852.0px;font-size:18px;color:#f0f0f0;transform:scaleX(0.9193);z-index:3;">Tag</span><span class="t" style="left:146px;top:879.0px;font-size:18px;color:#f0f0f0;transform:scaleX(1.0062);z-index:3;">Main0</span><span class="t" style="left:146px;top:906.0px;font-size:18px;color:#f0f0f0;transform:scaleX(0.9782);z-index:3;">Sub0</span><span class="t" style="left:116px;top:933.0px;font-size:18px;color:#f0f0f0;transform:scaleX(0.9580);z-index:3;">System Tag</span><span class="t" style="left:86px;top:960.0px;font-size:18px;color:#f0f0f0;transform:scaleX(0.9312);z-index:3;">Status Page</span><span class="t" style="left:116px;top:987.0px;font-size:18px;color:#f0f0f0;transform:scaleX(1.0297);z-index:3;">Untitled-0</span><span class="t" style="left:85px;top:1014.0px;font-size:18px;color:#f0f0f0;transform:scaleX(1.1068);z-index:3;">Motion</span><span class="t" style="left:115px;top:1041.0px;font-size:18px;color:#f0f0f0;transform:scaleX(1.0466);z-index:3;">Motion Network</span><span class="t" style="left:115px;top:1068.0px;font-size:18px;color:#f0f0f0;transform:scaleX(1.0444);z-index:3;">Motion Axis</span><span class="t" style="left:115px;top:1095.0px;font-size:18px;color:#f0f0f0;transform:scaleX(1.0349);z-index:3;">Motion Point</span><span class="t" style="left:115px;top:1122.0px;font-size:18px;color:#f0f0f0;transform:scaleX(1.0348);z-index:3;">Motion Flow</span><span class="t" style="left:116px;top:1149.0px;font-size:18px;color:#f0f0f0;transform:scaleX(1.0099);z-index:3;">Motion Sync Control</span><span class="t" style="left:146px;top:1176.0px;font-size:18px;color:#f0f0f0;transform:scaleX(0.9277);z-index:3;">Sync Parameter</span><span class="t" style="left:146px;top:1203.0px;font-size:18px;color:#f0f0f0;transform:scaleX(1.0305);z-index:3;">Contact Output</span><span class="t" style="left:9px;top:232.0px;font-size:18px;color:#f0f0f0;transform:scaleX(0.9922);z-index:3;clip-path:inset(0 0 2.500px 0);">Project Management</span><span class="t" style="left:746px;top:237.5px;font-size:18px;color:#000;transform:scaleX(1.0050);">Main0</span><span class="t" style="left:885px;top:236.0px;font-size:18px;color:#000;transform:scaleX(1.0543);">Motion Network</span><span class="t" style="left:758px;top:287.5px;font-size:18px;color:#000;transform:scaleX(0.9942);">Advanced</span><span class="t" style="left:800px;top:333.0px;font-size:18px;color:#000;transform:scaleX(1.0350);">Motion Controller</span>
</body></html>
